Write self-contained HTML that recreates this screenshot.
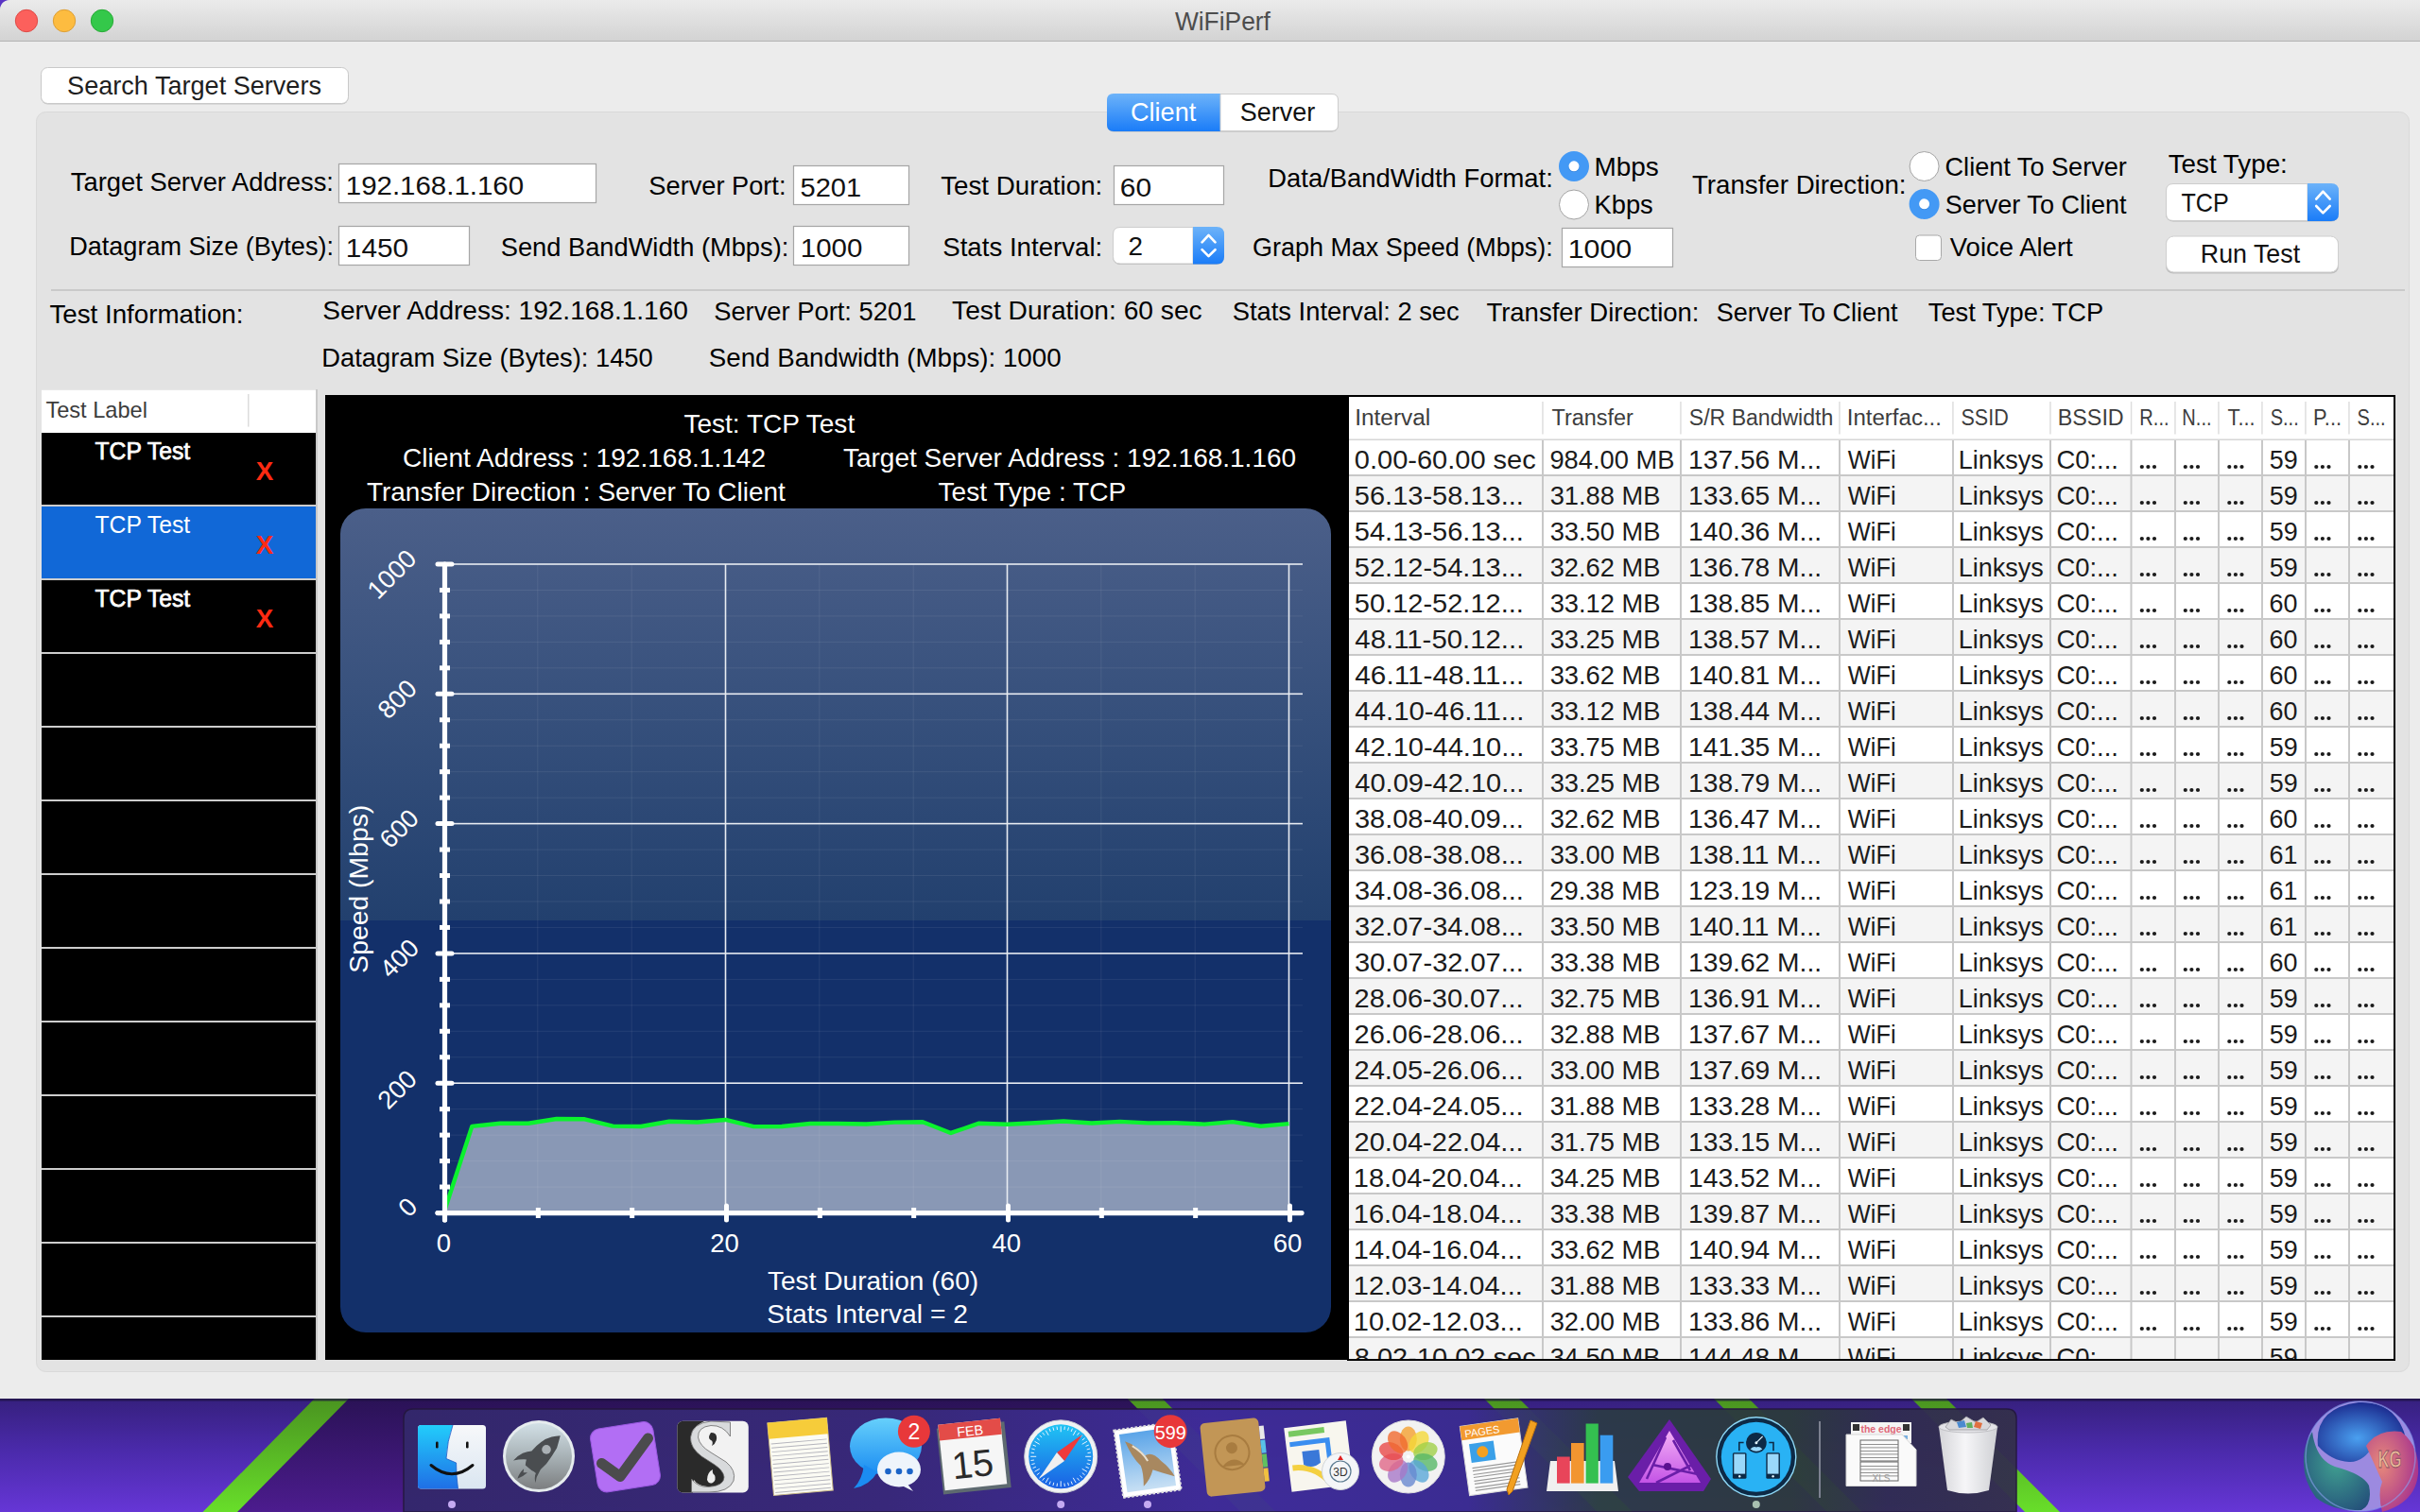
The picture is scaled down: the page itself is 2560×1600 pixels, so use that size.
<!DOCTYPE html>
<html><head><meta charset="utf-8"><title>WiFiPerf</title>
<style>
html,body{margin:0;padding:0;width:2560px;height:1600px;overflow:hidden;background:#ececec;}
svg{display:block;font-family:"Liberation Sans",sans-serif;}
</style></head><body>
<svg width="2560" height="1600" viewBox="0 0 2560 1600">
<defs>
<linearGradient id="wpv" x1="0" y1="0" x2="0" y2="1">
 <stop offset="0" stop-color="#36207e"/><stop offset="0.45" stop-color="#4a2aaa"/><stop offset="1" stop-color="#6636d6"/>
</linearGradient>
<linearGradient id="wpd" x1="0" y1="0" x2="0" y2="1">
 <stop offset="0" stop-color="#2a1256"/><stop offset="1" stop-color="#4c1c8e"/>
</linearGradient>
<linearGradient id="stripe" x1="0" y1="0" x2="0" y2="1">
 <stop offset="0" stop-color="#4a9420"/><stop offset="1" stop-color="#68de2a"/>
</linearGradient>
<linearGradient id="tb" x1="0" y1="0" x2="0" y2="1">
 <stop offset="0" stop-color="#ebebeb"/><stop offset="1" stop-color="#d3d3d3"/>
</linearGradient>
<linearGradient id="blue" x1="0" y1="0" x2="0" y2="1">
 <stop offset="0" stop-color="#6db3f9"/><stop offset="1" stop-color="#1a7cf8"/>
</linearGradient>
<linearGradient id="chartbg" x1="0" y1="0" x2="0" y2="1">
 <stop offset="0" stop-color="#4b5f89"/><stop offset="0.5" stop-color="#36507c"/><stop offset="1" stop-color="#22406e"/>
</linearGradient>
<linearGradient id="dockg" x1="427" y1="0" x2="2133" y2="0" gradientUnits="userSpaceOnUse">
 <stop offset="0" stop-color="#34286c"/><stop offset="0.3" stop-color="#38297a"/>
 <stop offset="0.5" stop-color="#3e2c98"/><stop offset="0.66" stop-color="#3a2c90"/>
 <stop offset="0.74" stop-color="#2c3a48"/><stop offset="0.86" stop-color="#2c3a3c"/>
 <stop offset="0.92" stop-color="#302c52"/><stop offset="1" stop-color="#34304c"/>
</linearGradient>
<clipPath id="chartclip"><rect x="360" y="538" width="1048" height="872" rx="27"/></clipPath>
</defs>
<rect x="0" y="1480" width="2560" height="120" fill="url(#wpv)"/>
<polygon points="350,1480 1200,1480 1320,1600 232,1600" fill="url(#wpd)"/>
<polygon points="332.7,1480 369,1480 251,1600 214.5,1600" fill="url(#stripe)"/>
<polygon points="1192.7,1480 1229.7,1480 1349.7,1600 1312.7,1600" fill="url(#stripe)"/>
<polygon points="1570.0,1480 1607.0,1480 1727.0,1600 1690.0,1600" fill="url(#stripe)"/>
<polygon points="1813.0,1480 1850.0,1480 1970.0,1600 1933.0,1600" fill="url(#stripe)"/>
<polygon points="2022.0,1480 2059.0,1480 2179.0,1600 2142.0,1600" fill="url(#stripe)"/>
<rect x="0" y="1480" width="2560" height="2.5" fill="#1e1240" opacity="0.7"/>
<rect x="0" y="0" width="14" height="14" fill="#5a34c4"/>
<path d="M0,12 Q0,0 12,0 L2560,0 L2560,1480 L8,1480 Q0,1480 0,1472 Z" fill="#ececec"/>
<path d="M0,12 Q0,0 12,0 L2560,0 L2560,43 L0,43 Z" fill="url(#tb)"/>
<rect x="0" y="43" width="2560" height="1" fill="#b4b4b4"/>
<circle cx="28" cy="22" r="11.7" fill="#fc605c" stroke="#de4a46" stroke-width="1"/>
<circle cx="68" cy="22" r="11.7" fill="#fdbc40" stroke="#de9f34" stroke-width="1"/>
<circle cx="108" cy="22" r="11.7" fill="#34c84a" stroke="#27aa35" stroke-width="1"/>
<text x="1242.88" y="32.00" font-size="27.50" fill="#4d4d4d" textLength="101.08" lengthAdjust="spacingAndGlyphs">WiFiPerf</text>
<rect x="43.5" y="72" width="325" height="38.5" rx="7" fill="#c6c6c6"/>
<rect x="43.5" y="71.5" width="325" height="38" rx="7" fill="#fff" stroke="#c9c9c9" stroke-width="1"/>
<text x="71.09" y="100.00" font-size="27.80" fill="#1e1e1e" textLength="268.88" lengthAdjust="spacingAndGlyphs">Search Target Servers</text>
<rect x="38.5" y="118.5" width="2510" height="1333" rx="10" fill="#e3e3e3" stroke="#d9d9d9" stroke-width="1"/>
<rect x="1171" y="100" width="245" height="39.5" rx="7" fill="#b8b8b8"/>
<path d="M1178,99 L1291,99 L1291,139 L1178,139 Q1171,139 1171,132 L1171,106 Q1171,99 1178,99 Z" fill="url(#blue)"/>
<path d="M1291,99.5 L1409,99.5 Q1415.5,99.5 1415.5,106 L1415.5,132 Q1415.5,138.5 1409,138.5 L1291,138.5 Z" fill="#fff" stroke="#cdcdcd" stroke-width="1"/>
<text x="1196.02" y="128.20" font-size="27.80" fill="#fff" textLength="69.27" lengthAdjust="spacingAndGlyphs">Client</text>
<text x="1311.67" y="128.20" font-size="27.80" fill="#111" textLength="79.47" lengthAdjust="spacingAndGlyphs">Server</text>
<text x="74.80" y="202.20" font-size="27.80" fill="#000" textLength="278.16" lengthAdjust="spacingAndGlyphs">Target Server Address:</text>
<rect x="358.5" y="173.5" width="272.0" height="41.0" fill="#fff" stroke="#a6a6a6" stroke-width="1.2"/>
<text x="365.76" y="206.20" font-size="27.80" fill="#111" textLength="188.39" lengthAdjust="spacingAndGlyphs">192.168.1.160</text>
<text x="686.36" y="206.00" font-size="27.80" fill="#000" textLength="145.12" lengthAdjust="spacingAndGlyphs">Server Port:</text>
<rect x="839.5" y="175.5" width="122.0" height="41.0" fill="#fff" stroke="#a6a6a6" stroke-width="1.2"/>
<text x="846.54" y="208.00" font-size="27.80" fill="#111" textLength="64.68" lengthAdjust="spacingAndGlyphs">5201</text>
<text x="995.19" y="206.00" font-size="27.80" fill="#000" textLength="171.10" lengthAdjust="spacingAndGlyphs">Test Duration:</text>
<rect x="1178.5" y="175.5" width="116.0" height="41.0" fill="#fff" stroke="#a6a6a6" stroke-width="1.2"/>
<text x="1184.88" y="208.00" font-size="27.80" fill="#111" textLength="33.29" lengthAdjust="spacingAndGlyphs">60</text>
<text x="1341.25" y="198.40" font-size="27.80" fill="#000" textLength="301.55" lengthAdjust="spacingAndGlyphs">Data/BandWidth Format:</text>
<circle cx="1665" cy="176" r="16" fill="#4399f5"/>
<circle cx="1665" cy="176.5" r="5.6" fill="#1a5cb0" opacity="0.35"/>
<circle cx="1665" cy="175.8" r="5.5" fill="#fff"/>
<circle cx="1665" cy="216.5" r="15.5" fill="#fff" stroke="#a4a4a4" stroke-width="1"/>
<text x="1686.51" y="185.70" font-size="27.80" fill="#000" textLength="68.30" lengthAdjust="spacingAndGlyphs">Mbps</text>
<text x="1686.56" y="225.70" font-size="27.80" fill="#000" textLength="62.23" lengthAdjust="spacingAndGlyphs">Kbps</text>
<text x="1789.98" y="205.00" font-size="27.80" fill="#000" textLength="226.53" lengthAdjust="spacingAndGlyphs">Transfer Direction:</text>
<circle cx="2035.6" cy="176" r="15.5" fill="#fff" stroke="#a4a4a4" stroke-width="1"/>
<circle cx="2035.6" cy="216" r="16" fill="#4399f5"/>
<circle cx="2035.6" cy="216.5" r="5.6" fill="#1a5cb0" opacity="0.35"/>
<circle cx="2035.6" cy="215.8" r="5.5" fill="#fff"/>
<text x="2057.55" y="185.50" font-size="27.80" fill="#000" textLength="192.29" lengthAdjust="spacingAndGlyphs">Client To Server</text>
<text x="2057.69" y="225.50" font-size="27.80" fill="#000" textLength="191.90" lengthAdjust="spacingAndGlyphs">Server To Client</text>
<text x="2293.70" y="182.50" font-size="27.80" fill="#000" textLength="126.14" lengthAdjust="spacingAndGlyphs">Test Type:</text>
<rect x="2291" y="195" width="183" height="39.5" rx="8" fill="#b8b8b8"/>
<path d="M2299,194.5 L2441,194.5 L2441,233.5 L2299,233.5 Q2291.5,233.5 2291.5,226 L2291.5,202 Q2291.5,194.5 2299,194.5 Z" fill="#fff" stroke="#cdcdcd" stroke-width="1"/>
<path d="M2441,194 L2466,194 Q2474,194 2474,202 L2474,226 Q2474,234 2466,234 L2441,234 Z" fill="url(#blue)"/>
<polyline points="2450.2,210.6 2457.4,202.7 2464.7,210.6" fill="none" stroke="#fff" stroke-width="2.6" stroke-linecap="round" stroke-linejoin="round"/>
<polyline points="2450.2,218.0 2457.4,225.3 2464.7,218.0" fill="none" stroke="#fff" stroke-width="2.6" stroke-linecap="round" stroke-linejoin="round"/>
<text x="2307.44" y="223.80" font-size="27.80" fill="#111" textLength="50.29" lengthAdjust="spacingAndGlyphs">TCP</text>
<text x="73.18" y="270.00" font-size="27.80" fill="#000" textLength="279.79" lengthAdjust="spacingAndGlyphs">Datagram Size (Bytes):</text>
<rect x="358.5" y="239.5" width="138.0" height="41.0" fill="#fff" stroke="#a6a6a6" stroke-width="1.2"/>
<text x="365.83" y="271.50" font-size="27.80" fill="#111" textLength="66.23" lengthAdjust="spacingAndGlyphs">1450</text>
<text x="529.76" y="271.00" font-size="27.80" fill="#000" textLength="304.53" lengthAdjust="spacingAndGlyphs">Send BandWidth (Mbps):</text>
<rect x="839.5" y="239.5" width="122.0" height="41.0" fill="#fff" stroke="#a6a6a6" stroke-width="1.2"/>
<text x="846.75" y="271.50" font-size="27.80" fill="#111" textLength="65.60" lengthAdjust="spacingAndGlyphs">1000</text>
<text x="997.24" y="271.00" font-size="27.80" fill="#000" textLength="169.08" lengthAdjust="spacingAndGlyphs">Stats Interval:</text>
<rect x="1177" y="241" width="118" height="39" rx="8" fill="#b8b8b8"/>
<path d="M1185,240.5 L1262,240.5 L1262,279 L1185,279 Q1177.5,279 1177.5,271.5 L1177.5,248 Q1177.5,240.5 1185,240.5 Z" fill="#fff" stroke="#cdcdcd" stroke-width="1"/>
<path d="M1262,240 L1287,240 Q1295,240 1295,248 L1295,271.5 Q1295,279.5 1287,279.5 L1262,279.5 Z" fill="url(#blue)"/>
<polyline points="1271.6,256.3 1278.5,248.9 1285.5,256.3" fill="none" stroke="#fff" stroke-width="2.6" stroke-linecap="round" stroke-linejoin="round"/>
<polyline points="1271.6,264.2 1278.5,271.1 1285.5,264.2" fill="none" stroke="#fff" stroke-width="2.6" stroke-linecap="round" stroke-linejoin="round"/>
<text x="1193.60" y="269.70" font-size="27.80" fill="#111" textLength="15.50" lengthAdjust="spacingAndGlyphs">2</text>
<text x="1324.94" y="271.00" font-size="27.80" fill="#000" textLength="317.82" lengthAdjust="spacingAndGlyphs">Graph Max Speed (Mbps):</text>
<rect x="1652.5" y="241.5" width="117.0" height="41.0" fill="#fff" stroke="#a6a6a6" stroke-width="1.2"/>
<text x="1658.69" y="272.50" font-size="27.80" fill="#111" textLength="67.50" lengthAdjust="spacingAndGlyphs">1000</text>
<rect x="2026.5" y="249" width="27" height="26.5" rx="4" fill="#fff" stroke="#a9a9a9" stroke-width="1"/>
<text x="2062.78" y="271.00" font-size="27.80" fill="#000" textLength="129.91" lengthAdjust="spacingAndGlyphs">Voice Alert</text>
<rect x="2291.0" y="250.5" width="183.0" height="39.0" rx="8" fill="#bdbdbd"/>
<rect x="2291.5" y="250.0" width="182.0" height="38.0" rx="8" fill="#fff" stroke="#cfcfcf" stroke-width="1"/>
<text x="2327.87" y="278.00" font-size="27.80" fill="#111" textLength="105.22" lengthAdjust="spacingAndGlyphs">Run Test</text>
<rect x="54" y="306" width="2490" height="2" fill="#cacaca"/>
<text x="52.39" y="342.00" font-size="27.80" fill="#000" textLength="205.11" lengthAdjust="spacingAndGlyphs">Test Information:</text>
<text x="341.33" y="338.00" font-size="27.80" fill="#000" textLength="386.56" lengthAdjust="spacingAndGlyphs">Server Address: 192.168.1.160</text>
<text x="755.16" y="338.50" font-size="27.80" fill="#000" textLength="214.18" lengthAdjust="spacingAndGlyphs">Server Port: 5201</text>
<text x="1007.09" y="338.00" font-size="27.80" fill="#000" textLength="264.62" lengthAdjust="spacingAndGlyphs">Test Duration:  60 sec</text>
<text x="1303.76" y="338.50" font-size="27.80" fill="#000" textLength="239.96" lengthAdjust="spacingAndGlyphs">Stats Interval: 2 sec</text>
<text x="1572.39" y="340.00" font-size="27.80" fill="#000" textLength="225.11" lengthAdjust="spacingAndGlyphs">Transfer Direction:</text>
<text x="1815.80" y="340.00" font-size="27.80" fill="#000" textLength="191.70" lengthAdjust="spacingAndGlyphs">Server To Client</text>
<text x="2039.81" y="340.00" font-size="27.80" fill="#000" textLength="185.29" lengthAdjust="spacingAndGlyphs">Test Type: TCP</text>
<text x="340.36" y="388.00" font-size="27.80" fill="#000" textLength="350.30" lengthAdjust="spacingAndGlyphs">Datagram Size (Bytes): 1450</text>
<text x="749.77" y="388.00" font-size="27.80" fill="#000" textLength="372.79" lengthAdjust="spacingAndGlyphs">Send Bandwidth (Mbps):  1000</text>
<rect x="334" y="412" width="2" height="1027" fill="#c9c9c9"/>
<rect x="44" y="412.8" width="290" height="45.2" fill="#fff"/>
<rect x="262" y="417" width="1.5" height="34.6" fill="#dcdcdc"/>
<text x="48.38" y="442.20" font-size="23.60" fill="#3c3c3c" textLength="107.56" lengthAdjust="spacingAndGlyphs">Test Label</text>
<rect x="44" y="458" width="290" height="981" fill="#000"/>
<rect x="44" y="534" width="290" height="2" fill="#cdcdcd"/>
<rect x="44" y="612" width="290" height="2" fill="#cdcdcd"/>
<rect x="44" y="690" width="290" height="2" fill="#cdcdcd"/>
<rect x="44" y="768" width="290" height="2" fill="#cdcdcd"/>
<rect x="44" y="846" width="290" height="2" fill="#cdcdcd"/>
<rect x="44" y="924" width="290" height="2" fill="#cdcdcd"/>
<rect x="44" y="1002" width="290" height="2" fill="#cdcdcd"/>
<rect x="44" y="1080" width="290" height="2" fill="#cdcdcd"/>
<rect x="44" y="1158" width="290" height="2" fill="#cdcdcd"/>
<rect x="44" y="1236" width="290" height="2" fill="#cdcdcd"/>
<rect x="44" y="1314" width="290" height="2" fill="#cdcdcd"/>
<rect x="44" y="1392" width="290" height="2" fill="#cdcdcd"/>
<rect x="44" y="536" width="290" height="76" fill="#1168d7"/>
<text x="100.46" y="486.10" font-size="25.60" fill="#fff" textLength="100.71" lengthAdjust="spacingAndGlyphs" stroke="#fff" stroke-width="0.75">TCP Test</text>
<text x="270.76" y="508.00" font-size="28.50" fill="#ff2a12" font-weight="bold" textLength="18.49" lengthAdjust="spacingAndGlyphs">X</text>
<text x="100.46" y="564.10" font-size="25.60" fill="#fff" textLength="100.71" lengthAdjust="spacingAndGlyphs">TCP Test</text>
<text x="270.76" y="586.00" font-size="28.50" fill="#ff2a12" font-weight="bold" textLength="18.49" lengthAdjust="spacingAndGlyphs">X</text>
<text x="100.46" y="642.10" font-size="25.60" fill="#fff" textLength="100.71" lengthAdjust="spacingAndGlyphs" stroke="#fff" stroke-width="0.75">TCP Test</text>
<text x="270.76" y="664.00" font-size="28.50" fill="#ff2a12" font-weight="bold" textLength="18.49" lengthAdjust="spacingAndGlyphs">X</text>
<rect x="344" y="418" width="1081" height="1021" fill="#000"/>
<g clip-path="url(#chartclip)">
<rect x="360" y="538" width="1048" height="436" fill="url(#chartbg)"/>
<rect x="360" y="974" width="1048" height="436" fill="#13306a"/>
<rect x="568.33" y="597" width="1" height="686" fill="#fff" opacity="0.08"/>
<rect x="667.67" y="597" width="1" height="686" fill="#fff" opacity="0.08"/>
<rect x="866.33" y="597" width="1" height="686" fill="#fff" opacity="0.08"/>
<rect x="965.66" y="597" width="1" height="686" fill="#fff" opacity="0.08"/>
<rect x="1164.33" y="597" width="1" height="686" fill="#fff" opacity="0.08"/>
<rect x="1263.66" y="597" width="1" height="686" fill="#fff" opacity="0.08"/>
<rect x="470" y="1255.54" width="908" height="1" fill="#fff" opacity="0.08"/>
<rect x="470" y="1228.08" width="908" height="1" fill="#fff" opacity="0.08"/>
<rect x="470" y="1200.62" width="908" height="1" fill="#fff" opacity="0.08"/>
<rect x="470" y="1173.16" width="908" height="1" fill="#fff" opacity="0.08"/>
<rect x="470" y="1118.24" width="908" height="1" fill="#fff" opacity="0.08"/>
<rect x="470" y="1090.78" width="908" height="1" fill="#fff" opacity="0.08"/>
<rect x="470" y="1063.32" width="908" height="1" fill="#fff" opacity="0.08"/>
<rect x="470" y="1035.86" width="908" height="1" fill="#fff" opacity="0.08"/>
<rect x="470" y="980.94" width="908" height="1" fill="#fff" opacity="0.08"/>
<rect x="470" y="953.48" width="908" height="1" fill="#fff" opacity="0.08"/>
<rect x="470" y="926.02" width="908" height="1" fill="#fff" opacity="0.08"/>
<rect x="470" y="898.56" width="908" height="1" fill="#fff" opacity="0.08"/>
<rect x="470" y="843.64" width="908" height="1" fill="#fff" opacity="0.08"/>
<rect x="470" y="816.18" width="908" height="1" fill="#fff" opacity="0.08"/>
<rect x="470" y="788.72" width="908" height="1" fill="#fff" opacity="0.08"/>
<rect x="470" y="761.26" width="908" height="1" fill="#fff" opacity="0.08"/>
<rect x="470" y="706.34" width="908" height="1" fill="#fff" opacity="0.08"/>
<rect x="470" y="678.88" width="908" height="1" fill="#fff" opacity="0.08"/>
<rect x="470" y="651.42" width="908" height="1" fill="#fff" opacity="0.08"/>
<rect x="470" y="623.96" width="908" height="1" fill="#fff" opacity="0.08"/>
<polygon points="469.50,1283.50 499.30,1191.85 529.10,1188.76 558.90,1188.76 588.70,1183.96 618.50,1184.31 648.30,1191.61 678.10,1191.97 707.90,1186.74 737.70,1187.48 767.50,1184.97 797.30,1192.09 827.10,1192.00 856.90,1188.98 886.70,1188.99 916.50,1189.51 946.30,1187.65 976.10,1187.31 1005.90,1198.93 1035.70,1188.69 1065.50,1189.81 1095.30,1188.22 1125.10,1186.46 1154.90,1188.46 1184.70,1186.83 1214.50,1188.37 1244.30,1188.18 1274.10,1189.60 1303.90,1187.14 1333.70,1191.75 1363.50,1189.07 1363.50,1283.50" fill="#fff" fill-opacity="0.5"/>
<rect x="470" y="1145.40" width="908" height="1.6" fill="#e8ecf2"/>
<rect x="470" y="1008.10" width="908" height="1.6" fill="#e8ecf2"/>
<rect x="470" y="870.80" width="908" height="1.6" fill="#e8ecf2"/>
<rect x="470" y="733.50" width="908" height="1.6" fill="#e8ecf2"/>
<rect x="470" y="596.20" width="908" height="1.6" fill="#e8ecf2"/>
<rect x="766.70" y="597" width="1.6" height="686" fill="#e8ecf2"/>
<rect x="1064.70" y="597" width="1.6" height="686" fill="#e8ecf2"/>
<rect x="1362.70" y="597" width="1.6" height="686" fill="#e8ecf2"/>
<polyline points="469.50,1283.50 499.30,1191.85 529.10,1188.76 558.90,1188.76 588.70,1183.96 618.50,1184.31 648.30,1191.61 678.10,1191.97 707.90,1186.74 737.70,1187.48 767.50,1184.97 797.30,1192.09 827.10,1192.00 856.90,1188.98 886.70,1188.99 916.50,1189.51 946.30,1187.65 976.10,1187.31 1005.90,1198.93 1035.70,1188.69 1065.50,1189.81 1095.30,1188.22 1125.10,1186.46 1154.90,1188.46 1184.70,1186.83 1214.50,1188.37 1244.30,1188.18 1274.10,1189.60 1303.90,1187.14 1333.70,1191.75 1363.50,1189.07" fill="none" stroke="#0bf22e" stroke-width="4.4" stroke-linejoin="round"/>
<line x1="470.5" y1="597" x2="470.5" y2="1291" stroke="#fff" stroke-width="5.2" stroke-linecap="round"/>
<line x1="463" y1="1283.6" x2="1377" y2="1283.6" stroke="#fff" stroke-width="5.2" stroke-linecap="round"/>
<line x1="463" y1="1283.50" x2="478" y2="1283.50" stroke="#fff" stroke-width="5" stroke-linecap="round"/>
<rect x="465" y="1253.54" width="11" height="5" fill="#fff"/>
<rect x="465" y="1226.08" width="11" height="5" fill="#fff"/>
<rect x="465" y="1198.62" width="11" height="5" fill="#fff"/>
<rect x="465" y="1171.16" width="11" height="5" fill="#fff"/>
<line x1="463" y1="1146.20" x2="478" y2="1146.20" stroke="#fff" stroke-width="5" stroke-linecap="round"/>
<rect x="465" y="1116.24" width="11" height="5" fill="#fff"/>
<rect x="465" y="1088.78" width="11" height="5" fill="#fff"/>
<rect x="465" y="1061.32" width="11" height="5" fill="#fff"/>
<rect x="465" y="1033.86" width="11" height="5" fill="#fff"/>
<line x1="463" y1="1008.90" x2="478" y2="1008.90" stroke="#fff" stroke-width="5" stroke-linecap="round"/>
<rect x="465" y="978.94" width="11" height="5" fill="#fff"/>
<rect x="465" y="951.48" width="11" height="5" fill="#fff"/>
<rect x="465" y="924.02" width="11" height="5" fill="#fff"/>
<rect x="465" y="896.56" width="11" height="5" fill="#fff"/>
<line x1="463" y1="871.60" x2="478" y2="871.60" stroke="#fff" stroke-width="5" stroke-linecap="round"/>
<rect x="465" y="841.64" width="11" height="5" fill="#fff"/>
<rect x="465" y="814.18" width="11" height="5" fill="#fff"/>
<rect x="465" y="786.72" width="11" height="5" fill="#fff"/>
<rect x="465" y="759.26" width="11" height="5" fill="#fff"/>
<line x1="463" y1="734.30" x2="478" y2="734.30" stroke="#fff" stroke-width="5" stroke-linecap="round"/>
<rect x="465" y="704.34" width="11" height="5" fill="#fff"/>
<rect x="465" y="676.88" width="11" height="5" fill="#fff"/>
<rect x="465" y="649.42" width="11" height="5" fill="#fff"/>
<rect x="465" y="621.96" width="11" height="5" fill="#fff"/>
<line x1="463" y1="597.00" x2="478" y2="597.00" stroke="#fff" stroke-width="5" stroke-linecap="round"/>
<line x1="470.50" y1="1276" x2="470.50" y2="1291" stroke="#fff" stroke-width="5" stroke-linecap="round"/>
<rect x="566.83" y="1278" width="5" height="11" fill="#fff"/>
<rect x="666.17" y="1278" width="5" height="11" fill="#fff"/>
<line x1="768.50" y1="1276" x2="768.50" y2="1291" stroke="#fff" stroke-width="5" stroke-linecap="round"/>
<rect x="864.83" y="1278" width="5" height="11" fill="#fff"/>
<rect x="964.16" y="1278" width="5" height="11" fill="#fff"/>
<line x1="1066.50" y1="1276" x2="1066.50" y2="1291" stroke="#fff" stroke-width="5" stroke-linecap="round"/>
<rect x="1162.83" y="1278" width="5" height="11" fill="#fff"/>
<rect x="1262.16" y="1278" width="5" height="11" fill="#fff"/>
<line x1="1364.50" y1="1276" x2="1364.50" y2="1291" stroke="#fff" stroke-width="5" stroke-linecap="round"/>
<g transform="translate(414.4,607.0) rotate(-45)"><text x="-30.53" y="9.67" font-size="27.00" fill="#fff" textLength="60.06" lengthAdjust="spacingAndGlyphs">1000</text></g>
<g transform="translate(420.0,739.5) rotate(-45)"><text x="-22.58" y="9.67" font-size="27.00" fill="#fff" textLength="45.05" lengthAdjust="spacingAndGlyphs">800</text></g>
<g transform="translate(422.0,876.5) rotate(-45)"><text x="-22.68" y="9.67" font-size="27.00" fill="#fff" textLength="45.05" lengthAdjust="spacingAndGlyphs">600</text></g>
<g transform="translate(422.0,1014.0) rotate(-45)"><text x="-22.31" y="9.67" font-size="27.00" fill="#fff" textLength="45.05" lengthAdjust="spacingAndGlyphs">400</text></g>
<g transform="translate(420.0,1152.5) rotate(-45)"><text x="-22.68" y="9.67" font-size="27.00" fill="#fff" textLength="45.05" lengthAdjust="spacingAndGlyphs">200</text></g>
<g transform="translate(431.0,1277.0) rotate(-45)"><text x="-7.51" y="9.67" font-size="27.00" fill="#fff" textLength="15.02" lengthAdjust="spacingAndGlyphs">0</text></g>
<g transform="translate(381.6,941) rotate(-90)"><text x="-88.79" y="7.80" font-size="27.00" fill="#fff" textLength="178.05" lengthAdjust="spacingAndGlyphs">Speed (Mbps)</text></g>
<text x="461.85" y="1325.30" font-size="27.50" fill="#fff" textLength="15.29" lengthAdjust="spacingAndGlyphs">0</text>
<text x="751.15" y="1325.30" font-size="27.50" fill="#fff" textLength="30.59" lengthAdjust="spacingAndGlyphs">20</text>
<text x="1049.43" y="1325.30" font-size="27.50" fill="#fff" textLength="30.59" lengthAdjust="spacingAndGlyphs">40</text>
<text x="1346.84" y="1325.30" font-size="27.50" fill="#fff" textLength="30.59" lengthAdjust="spacingAndGlyphs">60</text>
<text x="811.98" y="1364.50" font-size="27.50" fill="#fff" textLength="223.14" lengthAdjust="spacingAndGlyphs">Test Duration (60)</text>
<text x="811.32" y="1400.20" font-size="27.50" fill="#fff" textLength="212.60" lengthAdjust="spacingAndGlyphs">Stats Interval = 2</text>
</g>
<text x="723.40" y="458.00" font-size="28.00" fill="#fff" textLength="180.80" lengthAdjust="spacingAndGlyphs">Test: TCP Test</text>
<text x="426.08" y="493.80" font-size="28.00" fill="#fff" textLength="384.03" lengthAdjust="spacingAndGlyphs">Client Address : 192.168.1.142</text>
<text x="891.98" y="493.80" font-size="28.00" fill="#fff" textLength="479.10" lengthAdjust="spacingAndGlyphs">Target Server Address : 192.168.1.160</text>
<text x="387.98" y="529.60" font-size="28.00" fill="#fff" textLength="442.82" lengthAdjust="spacingAndGlyphs">Transfer Direction : Server To Client</text>
<text x="992.59" y="529.60" font-size="28.00" fill="#fff" textLength="198.55" lengthAdjust="spacingAndGlyphs">Test Type : TCP</text>
<rect x="1425" y="418" width="1109" height="1022" fill="#000"/>
<rect x="1427" y="420" width="1105" height="1018" fill="#fff"/>
<svg x="1427" y="420" width="1105" height="1018" viewBox="1427 420 1105 1018" overflow="hidden">
<rect x="1427" y="502" width="1105" height="2" fill="#c8c8c8"/>
<rect x="1427" y="504" width="1105" height="36" fill="#f4f4f4"/>
<rect x="1427" y="540" width="1105" height="2" fill="#c8c8c8"/>
<rect x="1427" y="578" width="1105" height="2" fill="#c8c8c8"/>
<rect x="1427" y="580" width="1105" height="36" fill="#f4f4f4"/>
<rect x="1427" y="616" width="1105" height="2" fill="#c8c8c8"/>
<rect x="1427" y="654" width="1105" height="2" fill="#c8c8c8"/>
<rect x="1427" y="656" width="1105" height="36" fill="#f4f4f4"/>
<rect x="1427" y="692" width="1105" height="2" fill="#c8c8c8"/>
<rect x="1427" y="730" width="1105" height="2" fill="#c8c8c8"/>
<rect x="1427" y="732" width="1105" height="36" fill="#f4f4f4"/>
<rect x="1427" y="768" width="1105" height="2" fill="#c8c8c8"/>
<rect x="1427" y="806" width="1105" height="2" fill="#c8c8c8"/>
<rect x="1427" y="808" width="1105" height="36" fill="#f4f4f4"/>
<rect x="1427" y="844" width="1105" height="2" fill="#c8c8c8"/>
<rect x="1427" y="882" width="1105" height="2" fill="#c8c8c8"/>
<rect x="1427" y="884" width="1105" height="36" fill="#f4f4f4"/>
<rect x="1427" y="920" width="1105" height="2" fill="#c8c8c8"/>
<rect x="1427" y="958" width="1105" height="2" fill="#c8c8c8"/>
<rect x="1427" y="960" width="1105" height="36" fill="#f4f4f4"/>
<rect x="1427" y="996" width="1105" height="2" fill="#c8c8c8"/>
<rect x="1427" y="1034" width="1105" height="2" fill="#c8c8c8"/>
<rect x="1427" y="1036" width="1105" height="36" fill="#f4f4f4"/>
<rect x="1427" y="1072" width="1105" height="2" fill="#c8c8c8"/>
<rect x="1427" y="1110" width="1105" height="2" fill="#c8c8c8"/>
<rect x="1427" y="1112" width="1105" height="36" fill="#f4f4f4"/>
<rect x="1427" y="1148" width="1105" height="2" fill="#c8c8c8"/>
<rect x="1427" y="1186" width="1105" height="2" fill="#c8c8c8"/>
<rect x="1427" y="1188" width="1105" height="36" fill="#f4f4f4"/>
<rect x="1427" y="1224" width="1105" height="2" fill="#c8c8c8"/>
<rect x="1427" y="1262" width="1105" height="2" fill="#c8c8c8"/>
<rect x="1427" y="1264" width="1105" height="36" fill="#f4f4f4"/>
<rect x="1427" y="1300" width="1105" height="2" fill="#c8c8c8"/>
<rect x="1427" y="1338" width="1105" height="2" fill="#c8c8c8"/>
<rect x="1427" y="1340" width="1105" height="36" fill="#f4f4f4"/>
<rect x="1427" y="1376" width="1105" height="2" fill="#c8c8c8"/>
<rect x="1427" y="1414" width="1105" height="2" fill="#c8c8c8"/>
<rect x="1427" y="1416" width="1105" height="36" fill="#f4f4f4"/>
<rect x="1427" y="1452" width="1105" height="2" fill="#c8c8c8"/>
<rect x="1631.0" y="466" width="2" height="980" fill="#c8c8c8"/>
<rect x="1777.0" y="466" width="2" height="980" fill="#c8c8c8"/>
<rect x="1945.0" y="466" width="2" height="980" fill="#c8c8c8"/>
<rect x="2065.0" y="466" width="2" height="980" fill="#c8c8c8"/>
<rect x="2168.0" y="466" width="2" height="980" fill="#c8c8c8"/>
<rect x="2253.5" y="466" width="2" height="980" fill="#c8c8c8"/>
<rect x="2300.0" y="466" width="2" height="980" fill="#c8c8c8"/>
<rect x="2346.0" y="466" width="2" height="980" fill="#c8c8c8"/>
<rect x="2392.0" y="466" width="2" height="980" fill="#c8c8c8"/>
<rect x="2438.0" y="466" width="2" height="980" fill="#c8c8c8"/>
<rect x="2484.0" y="466" width="2" height="980" fill="#c8c8c8"/>
<rect x="1427" y="420" width="1105" height="45" fill="#fff"/>
<rect x="1427" y="464.5" width="1105" height="1.5" fill="#d6d6d6"/>
<rect x="1631.2" y="425" width="1.5" height="34.5" fill="#dedede"/>
<rect x="1777.2" y="425" width="1.5" height="34.5" fill="#dedede"/>
<rect x="1945.2" y="425" width="1.5" height="34.5" fill="#dedede"/>
<rect x="2065.2" y="425" width="1.5" height="34.5" fill="#dedede"/>
<rect x="2168.2" y="425" width="1.5" height="34.5" fill="#dedede"/>
<rect x="2253.8" y="425" width="1.5" height="34.5" fill="#dedede"/>
<rect x="2300.2" y="425" width="1.5" height="34.5" fill="#dedede"/>
<rect x="2346.2" y="425" width="1.5" height="34.5" fill="#dedede"/>
<rect x="2392.2" y="425" width="1.5" height="34.5" fill="#dedede"/>
<rect x="2438.2" y="425" width="1.5" height="34.5" fill="#dedede"/>
<rect x="2484.2" y="425" width="1.5" height="34.5" fill="#dedede"/>
<text x="1433.25" y="450.00" font-size="23.30" fill="#3d3d3d" textLength="79.98" lengthAdjust="spacingAndGlyphs">Interval</text>
<text x="1641.48" y="450.00" font-size="23.30" fill="#3d3d3d" textLength="86.41" lengthAdjust="spacingAndGlyphs">Transfer</text>
<text x="1786.85" y="450.00" font-size="23.30" fill="#3d3d3d" textLength="152.44" lengthAdjust="spacingAndGlyphs">S/R Bandwidth</text>
<text x="1953.78" y="450.00" font-size="23.30" fill="#3d3d3d" textLength="100.21" lengthAdjust="spacingAndGlyphs">Interfac...</text>
<text x="2074.52" y="450.00" font-size="23.30" fill="#3d3d3d" textLength="50.21" lengthAdjust="spacingAndGlyphs">SSID</text>
<text x="2176.79" y="450.00" font-size="23.30" fill="#3d3d3d" textLength="69.92" lengthAdjust="spacingAndGlyphs">BSSID</text>
<text x="2263.36" y="450.00" font-size="23.30" fill="#3d3d3d" textLength="31.17" lengthAdjust="spacingAndGlyphs">R...</text>
<text x="2308.36" y="450.00" font-size="23.30" fill="#3d3d3d" textLength="31.17" lengthAdjust="spacingAndGlyphs">N...</text>
<text x="2356.55" y="450.00" font-size="23.30" fill="#3d3d3d" textLength="28.94" lengthAdjust="spacingAndGlyphs">T...</text>
<text x="2401.69" y="450.00" font-size="23.30" fill="#3d3d3d" textLength="30.07" lengthAdjust="spacingAndGlyphs">S...</text>
<text x="2447.06" y="450.00" font-size="23.30" fill="#3d3d3d" textLength="30.07" lengthAdjust="spacingAndGlyphs">P...</text>
<text x="2493.59" y="450.00" font-size="23.30" fill="#3d3d3d" textLength="30.07" lengthAdjust="spacingAndGlyphs">S...</text>
<text x="1432.87" y="496.00" font-size="26.90" fill="#1b1b1b" textLength="191.90" lengthAdjust="spacingAndGlyphs">0.00-60.00 sec</text>
<text x="1639.42" y="496.00" font-size="26.90" fill="#1b1b1b" textLength="132.02" lengthAdjust="spacingAndGlyphs">984.00 MB</text>
<text x="1786.05" y="496.00" font-size="26.90" fill="#1b1b1b" textLength="141.02" lengthAdjust="spacingAndGlyphs">137.56 M...</text>
<text x="1954.69" y="496.00" font-size="26.90" fill="#1b1b1b" textLength="50.93" lengthAdjust="spacingAndGlyphs">WiFi</text>
<text x="2071.78" y="496.00" font-size="26.90" fill="#1b1b1b" textLength="90.09" lengthAdjust="spacingAndGlyphs">Linksys</text>
<text x="2175.41" y="496.00" font-size="26.90" fill="#1b1b1b" textLength="65.60" lengthAdjust="spacingAndGlyphs">C0:...</text>
<circle cx="2265.8" cy="494.0" r="2.1" fill="#1b1b1b"/>
<circle cx="2272.4" cy="494.0" r="2.1" fill="#1b1b1b"/>
<circle cx="2279.0" cy="494.0" r="2.1" fill="#1b1b1b"/>
<circle cx="2311.8" cy="494.0" r="2.1" fill="#1b1b1b"/>
<circle cx="2318.4" cy="494.0" r="2.1" fill="#1b1b1b"/>
<circle cx="2325.0" cy="494.0" r="2.1" fill="#1b1b1b"/>
<circle cx="2358.3" cy="494.0" r="2.1" fill="#1b1b1b"/>
<circle cx="2364.9" cy="494.0" r="2.1" fill="#1b1b1b"/>
<circle cx="2371.5" cy="494.0" r="2.1" fill="#1b1b1b"/>
<circle cx="2450.3" cy="494.0" r="2.1" fill="#1b1b1b"/>
<circle cx="2456.9" cy="494.0" r="2.1" fill="#1b1b1b"/>
<circle cx="2463.5" cy="494.0" r="2.1" fill="#1b1b1b"/>
<circle cx="2496.3" cy="494.0" r="2.1" fill="#1b1b1b"/>
<circle cx="2502.9" cy="494.0" r="2.1" fill="#1b1b1b"/>
<circle cx="2509.5" cy="494.0" r="2.1" fill="#1b1b1b"/>
<text x="2400.72" y="496.00" font-size="26.90" fill="#1b1b1b" textLength="29.92" lengthAdjust="spacingAndGlyphs">59</text>
<text x="1432.84" y="534.00" font-size="26.90" fill="#1b1b1b" textLength="179.01" lengthAdjust="spacingAndGlyphs">56.13-58.13...</text>
<text x="1639.66" y="534.00" font-size="26.90" fill="#1b1b1b" textLength="116.84" lengthAdjust="spacingAndGlyphs">31.88 MB</text>
<text x="1786.05" y="534.00" font-size="26.90" fill="#1b1b1b" textLength="141.02" lengthAdjust="spacingAndGlyphs">133.65 M...</text>
<text x="1954.69" y="534.00" font-size="26.90" fill="#1b1b1b" textLength="50.93" lengthAdjust="spacingAndGlyphs">WiFi</text>
<text x="2071.78" y="534.00" font-size="26.90" fill="#1b1b1b" textLength="90.09" lengthAdjust="spacingAndGlyphs">Linksys</text>
<text x="2175.41" y="534.00" font-size="26.90" fill="#1b1b1b" textLength="65.60" lengthAdjust="spacingAndGlyphs">C0:...</text>
<circle cx="2265.8" cy="532.0" r="2.1" fill="#1b1b1b"/>
<circle cx="2272.4" cy="532.0" r="2.1" fill="#1b1b1b"/>
<circle cx="2279.0" cy="532.0" r="2.1" fill="#1b1b1b"/>
<circle cx="2311.8" cy="532.0" r="2.1" fill="#1b1b1b"/>
<circle cx="2318.4" cy="532.0" r="2.1" fill="#1b1b1b"/>
<circle cx="2325.0" cy="532.0" r="2.1" fill="#1b1b1b"/>
<circle cx="2358.3" cy="532.0" r="2.1" fill="#1b1b1b"/>
<circle cx="2364.9" cy="532.0" r="2.1" fill="#1b1b1b"/>
<circle cx="2371.5" cy="532.0" r="2.1" fill="#1b1b1b"/>
<circle cx="2450.3" cy="532.0" r="2.1" fill="#1b1b1b"/>
<circle cx="2456.9" cy="532.0" r="2.1" fill="#1b1b1b"/>
<circle cx="2463.5" cy="532.0" r="2.1" fill="#1b1b1b"/>
<circle cx="2496.3" cy="532.0" r="2.1" fill="#1b1b1b"/>
<circle cx="2502.9" cy="532.0" r="2.1" fill="#1b1b1b"/>
<circle cx="2509.5" cy="532.0" r="2.1" fill="#1b1b1b"/>
<text x="2400.72" y="534.00" font-size="26.90" fill="#1b1b1b" textLength="29.92" lengthAdjust="spacingAndGlyphs">59</text>
<text x="1432.84" y="572.00" font-size="26.90" fill="#1b1b1b" textLength="179.01" lengthAdjust="spacingAndGlyphs">54.13-56.13...</text>
<text x="1639.66" y="572.00" font-size="26.90" fill="#1b1b1b" textLength="116.84" lengthAdjust="spacingAndGlyphs">33.50 MB</text>
<text x="1786.05" y="572.00" font-size="26.90" fill="#1b1b1b" textLength="141.02" lengthAdjust="spacingAndGlyphs">140.36 M...</text>
<text x="1954.69" y="572.00" font-size="26.90" fill="#1b1b1b" textLength="50.93" lengthAdjust="spacingAndGlyphs">WiFi</text>
<text x="2071.78" y="572.00" font-size="26.90" fill="#1b1b1b" textLength="90.09" lengthAdjust="spacingAndGlyphs">Linksys</text>
<text x="2175.41" y="572.00" font-size="26.90" fill="#1b1b1b" textLength="65.60" lengthAdjust="spacingAndGlyphs">C0:...</text>
<circle cx="2265.8" cy="570.0" r="2.1" fill="#1b1b1b"/>
<circle cx="2272.4" cy="570.0" r="2.1" fill="#1b1b1b"/>
<circle cx="2279.0" cy="570.0" r="2.1" fill="#1b1b1b"/>
<circle cx="2311.8" cy="570.0" r="2.1" fill="#1b1b1b"/>
<circle cx="2318.4" cy="570.0" r="2.1" fill="#1b1b1b"/>
<circle cx="2325.0" cy="570.0" r="2.1" fill="#1b1b1b"/>
<circle cx="2358.3" cy="570.0" r="2.1" fill="#1b1b1b"/>
<circle cx="2364.9" cy="570.0" r="2.1" fill="#1b1b1b"/>
<circle cx="2371.5" cy="570.0" r="2.1" fill="#1b1b1b"/>
<circle cx="2450.3" cy="570.0" r="2.1" fill="#1b1b1b"/>
<circle cx="2456.9" cy="570.0" r="2.1" fill="#1b1b1b"/>
<circle cx="2463.5" cy="570.0" r="2.1" fill="#1b1b1b"/>
<circle cx="2496.3" cy="570.0" r="2.1" fill="#1b1b1b"/>
<circle cx="2502.9" cy="570.0" r="2.1" fill="#1b1b1b"/>
<circle cx="2509.5" cy="570.0" r="2.1" fill="#1b1b1b"/>
<text x="2400.72" y="572.00" font-size="26.90" fill="#1b1b1b" textLength="29.92" lengthAdjust="spacingAndGlyphs">59</text>
<text x="1432.84" y="610.00" font-size="26.90" fill="#1b1b1b" textLength="179.01" lengthAdjust="spacingAndGlyphs">52.12-54.13...</text>
<text x="1639.66" y="610.00" font-size="26.90" fill="#1b1b1b" textLength="116.84" lengthAdjust="spacingAndGlyphs">32.62 MB</text>
<text x="1786.05" y="610.00" font-size="26.90" fill="#1b1b1b" textLength="141.02" lengthAdjust="spacingAndGlyphs">136.78 M...</text>
<text x="1954.69" y="610.00" font-size="26.90" fill="#1b1b1b" textLength="50.93" lengthAdjust="spacingAndGlyphs">WiFi</text>
<text x="2071.78" y="610.00" font-size="26.90" fill="#1b1b1b" textLength="90.09" lengthAdjust="spacingAndGlyphs">Linksys</text>
<text x="2175.41" y="610.00" font-size="26.90" fill="#1b1b1b" textLength="65.60" lengthAdjust="spacingAndGlyphs">C0:...</text>
<circle cx="2265.8" cy="608.0" r="2.1" fill="#1b1b1b"/>
<circle cx="2272.4" cy="608.0" r="2.1" fill="#1b1b1b"/>
<circle cx="2279.0" cy="608.0" r="2.1" fill="#1b1b1b"/>
<circle cx="2311.8" cy="608.0" r="2.1" fill="#1b1b1b"/>
<circle cx="2318.4" cy="608.0" r="2.1" fill="#1b1b1b"/>
<circle cx="2325.0" cy="608.0" r="2.1" fill="#1b1b1b"/>
<circle cx="2358.3" cy="608.0" r="2.1" fill="#1b1b1b"/>
<circle cx="2364.9" cy="608.0" r="2.1" fill="#1b1b1b"/>
<circle cx="2371.5" cy="608.0" r="2.1" fill="#1b1b1b"/>
<circle cx="2450.3" cy="608.0" r="2.1" fill="#1b1b1b"/>
<circle cx="2456.9" cy="608.0" r="2.1" fill="#1b1b1b"/>
<circle cx="2463.5" cy="608.0" r="2.1" fill="#1b1b1b"/>
<circle cx="2496.3" cy="608.0" r="2.1" fill="#1b1b1b"/>
<circle cx="2502.9" cy="608.0" r="2.1" fill="#1b1b1b"/>
<circle cx="2509.5" cy="608.0" r="2.1" fill="#1b1b1b"/>
<text x="2400.72" y="610.00" font-size="26.90" fill="#1b1b1b" textLength="29.92" lengthAdjust="spacingAndGlyphs">59</text>
<text x="1432.84" y="648.00" font-size="26.90" fill="#1b1b1b" textLength="179.01" lengthAdjust="spacingAndGlyphs">50.12-52.12...</text>
<text x="1639.66" y="648.00" font-size="26.90" fill="#1b1b1b" textLength="116.84" lengthAdjust="spacingAndGlyphs">33.12 MB</text>
<text x="1786.05" y="648.00" font-size="26.90" fill="#1b1b1b" textLength="141.02" lengthAdjust="spacingAndGlyphs">138.85 M...</text>
<text x="1954.69" y="648.00" font-size="26.90" fill="#1b1b1b" textLength="50.93" lengthAdjust="spacingAndGlyphs">WiFi</text>
<text x="2071.78" y="648.00" font-size="26.90" fill="#1b1b1b" textLength="90.09" lengthAdjust="spacingAndGlyphs">Linksys</text>
<text x="2175.41" y="648.00" font-size="26.90" fill="#1b1b1b" textLength="65.60" lengthAdjust="spacingAndGlyphs">C0:...</text>
<circle cx="2265.8" cy="646.0" r="2.1" fill="#1b1b1b"/>
<circle cx="2272.4" cy="646.0" r="2.1" fill="#1b1b1b"/>
<circle cx="2279.0" cy="646.0" r="2.1" fill="#1b1b1b"/>
<circle cx="2311.8" cy="646.0" r="2.1" fill="#1b1b1b"/>
<circle cx="2318.4" cy="646.0" r="2.1" fill="#1b1b1b"/>
<circle cx="2325.0" cy="646.0" r="2.1" fill="#1b1b1b"/>
<circle cx="2358.3" cy="646.0" r="2.1" fill="#1b1b1b"/>
<circle cx="2364.9" cy="646.0" r="2.1" fill="#1b1b1b"/>
<circle cx="2371.5" cy="646.0" r="2.1" fill="#1b1b1b"/>
<circle cx="2450.3" cy="646.0" r="2.1" fill="#1b1b1b"/>
<circle cx="2456.9" cy="646.0" r="2.1" fill="#1b1b1b"/>
<circle cx="2463.5" cy="646.0" r="2.1" fill="#1b1b1b"/>
<circle cx="2496.3" cy="646.0" r="2.1" fill="#1b1b1b"/>
<circle cx="2502.9" cy="646.0" r="2.1" fill="#1b1b1b"/>
<circle cx="2509.5" cy="646.0" r="2.1" fill="#1b1b1b"/>
<text x="2400.43" y="648.00" font-size="26.90" fill="#1b1b1b" textLength="29.92" lengthAdjust="spacingAndGlyphs">60</text>
<text x="1433.33" y="686.00" font-size="26.90" fill="#1b1b1b" textLength="179.01" lengthAdjust="spacingAndGlyphs">48.11-50.12...</text>
<text x="1639.66" y="686.00" font-size="26.90" fill="#1b1b1b" textLength="116.84" lengthAdjust="spacingAndGlyphs">33.25 MB</text>
<text x="1786.05" y="686.00" font-size="26.90" fill="#1b1b1b" textLength="141.02" lengthAdjust="spacingAndGlyphs">138.57 M...</text>
<text x="1954.69" y="686.00" font-size="26.90" fill="#1b1b1b" textLength="50.93" lengthAdjust="spacingAndGlyphs">WiFi</text>
<text x="2071.78" y="686.00" font-size="26.90" fill="#1b1b1b" textLength="90.09" lengthAdjust="spacingAndGlyphs">Linksys</text>
<text x="2175.41" y="686.00" font-size="26.90" fill="#1b1b1b" textLength="65.60" lengthAdjust="spacingAndGlyphs">C0:...</text>
<circle cx="2265.8" cy="684.0" r="2.1" fill="#1b1b1b"/>
<circle cx="2272.4" cy="684.0" r="2.1" fill="#1b1b1b"/>
<circle cx="2279.0" cy="684.0" r="2.1" fill="#1b1b1b"/>
<circle cx="2311.8" cy="684.0" r="2.1" fill="#1b1b1b"/>
<circle cx="2318.4" cy="684.0" r="2.1" fill="#1b1b1b"/>
<circle cx="2325.0" cy="684.0" r="2.1" fill="#1b1b1b"/>
<circle cx="2358.3" cy="684.0" r="2.1" fill="#1b1b1b"/>
<circle cx="2364.9" cy="684.0" r="2.1" fill="#1b1b1b"/>
<circle cx="2371.5" cy="684.0" r="2.1" fill="#1b1b1b"/>
<circle cx="2450.3" cy="684.0" r="2.1" fill="#1b1b1b"/>
<circle cx="2456.9" cy="684.0" r="2.1" fill="#1b1b1b"/>
<circle cx="2463.5" cy="684.0" r="2.1" fill="#1b1b1b"/>
<circle cx="2496.3" cy="684.0" r="2.1" fill="#1b1b1b"/>
<circle cx="2502.9" cy="684.0" r="2.1" fill="#1b1b1b"/>
<circle cx="2509.5" cy="684.0" r="2.1" fill="#1b1b1b"/>
<text x="2400.43" y="686.00" font-size="26.90" fill="#1b1b1b" textLength="29.92" lengthAdjust="spacingAndGlyphs">60</text>
<text x="1433.33" y="724.00" font-size="26.90" fill="#1b1b1b" textLength="179.01" lengthAdjust="spacingAndGlyphs">46.11-48.11...</text>
<text x="1639.66" y="724.00" font-size="26.90" fill="#1b1b1b" textLength="116.84" lengthAdjust="spacingAndGlyphs">33.62 MB</text>
<text x="1786.05" y="724.00" font-size="26.90" fill="#1b1b1b" textLength="141.02" lengthAdjust="spacingAndGlyphs">140.81 M...</text>
<text x="1954.69" y="724.00" font-size="26.90" fill="#1b1b1b" textLength="50.93" lengthAdjust="spacingAndGlyphs">WiFi</text>
<text x="2071.78" y="724.00" font-size="26.90" fill="#1b1b1b" textLength="90.09" lengthAdjust="spacingAndGlyphs">Linksys</text>
<text x="2175.41" y="724.00" font-size="26.90" fill="#1b1b1b" textLength="65.60" lengthAdjust="spacingAndGlyphs">C0:...</text>
<circle cx="2265.8" cy="722.0" r="2.1" fill="#1b1b1b"/>
<circle cx="2272.4" cy="722.0" r="2.1" fill="#1b1b1b"/>
<circle cx="2279.0" cy="722.0" r="2.1" fill="#1b1b1b"/>
<circle cx="2311.8" cy="722.0" r="2.1" fill="#1b1b1b"/>
<circle cx="2318.4" cy="722.0" r="2.1" fill="#1b1b1b"/>
<circle cx="2325.0" cy="722.0" r="2.1" fill="#1b1b1b"/>
<circle cx="2358.3" cy="722.0" r="2.1" fill="#1b1b1b"/>
<circle cx="2364.9" cy="722.0" r="2.1" fill="#1b1b1b"/>
<circle cx="2371.5" cy="722.0" r="2.1" fill="#1b1b1b"/>
<circle cx="2450.3" cy="722.0" r="2.1" fill="#1b1b1b"/>
<circle cx="2456.9" cy="722.0" r="2.1" fill="#1b1b1b"/>
<circle cx="2463.5" cy="722.0" r="2.1" fill="#1b1b1b"/>
<circle cx="2496.3" cy="722.0" r="2.1" fill="#1b1b1b"/>
<circle cx="2502.9" cy="722.0" r="2.1" fill="#1b1b1b"/>
<circle cx="2509.5" cy="722.0" r="2.1" fill="#1b1b1b"/>
<text x="2400.43" y="724.00" font-size="26.90" fill="#1b1b1b" textLength="29.92" lengthAdjust="spacingAndGlyphs">60</text>
<text x="1433.33" y="762.00" font-size="26.90" fill="#1b1b1b" textLength="179.01" lengthAdjust="spacingAndGlyphs">44.10-46.11...</text>
<text x="1639.66" y="762.00" font-size="26.90" fill="#1b1b1b" textLength="116.84" lengthAdjust="spacingAndGlyphs">33.12 MB</text>
<text x="1786.05" y="762.00" font-size="26.90" fill="#1b1b1b" textLength="141.02" lengthAdjust="spacingAndGlyphs">138.44 M...</text>
<text x="1954.69" y="762.00" font-size="26.90" fill="#1b1b1b" textLength="50.93" lengthAdjust="spacingAndGlyphs">WiFi</text>
<text x="2071.78" y="762.00" font-size="26.90" fill="#1b1b1b" textLength="90.09" lengthAdjust="spacingAndGlyphs">Linksys</text>
<text x="2175.41" y="762.00" font-size="26.90" fill="#1b1b1b" textLength="65.60" lengthAdjust="spacingAndGlyphs">C0:...</text>
<circle cx="2265.8" cy="760.0" r="2.1" fill="#1b1b1b"/>
<circle cx="2272.4" cy="760.0" r="2.1" fill="#1b1b1b"/>
<circle cx="2279.0" cy="760.0" r="2.1" fill="#1b1b1b"/>
<circle cx="2311.8" cy="760.0" r="2.1" fill="#1b1b1b"/>
<circle cx="2318.4" cy="760.0" r="2.1" fill="#1b1b1b"/>
<circle cx="2325.0" cy="760.0" r="2.1" fill="#1b1b1b"/>
<circle cx="2358.3" cy="760.0" r="2.1" fill="#1b1b1b"/>
<circle cx="2364.9" cy="760.0" r="2.1" fill="#1b1b1b"/>
<circle cx="2371.5" cy="760.0" r="2.1" fill="#1b1b1b"/>
<circle cx="2450.3" cy="760.0" r="2.1" fill="#1b1b1b"/>
<circle cx="2456.9" cy="760.0" r="2.1" fill="#1b1b1b"/>
<circle cx="2463.5" cy="760.0" r="2.1" fill="#1b1b1b"/>
<circle cx="2496.3" cy="760.0" r="2.1" fill="#1b1b1b"/>
<circle cx="2502.9" cy="760.0" r="2.1" fill="#1b1b1b"/>
<circle cx="2509.5" cy="760.0" r="2.1" fill="#1b1b1b"/>
<text x="2400.43" y="762.00" font-size="26.90" fill="#1b1b1b" textLength="29.92" lengthAdjust="spacingAndGlyphs">60</text>
<text x="1433.33" y="800.00" font-size="26.90" fill="#1b1b1b" textLength="179.01" lengthAdjust="spacingAndGlyphs">42.10-44.10...</text>
<text x="1639.66" y="800.00" font-size="26.90" fill="#1b1b1b" textLength="116.84" lengthAdjust="spacingAndGlyphs">33.75 MB</text>
<text x="1786.05" y="800.00" font-size="26.90" fill="#1b1b1b" textLength="141.02" lengthAdjust="spacingAndGlyphs">141.35 M...</text>
<text x="1954.69" y="800.00" font-size="26.90" fill="#1b1b1b" textLength="50.93" lengthAdjust="spacingAndGlyphs">WiFi</text>
<text x="2071.78" y="800.00" font-size="26.90" fill="#1b1b1b" textLength="90.09" lengthAdjust="spacingAndGlyphs">Linksys</text>
<text x="2175.41" y="800.00" font-size="26.90" fill="#1b1b1b" textLength="65.60" lengthAdjust="spacingAndGlyphs">C0:...</text>
<circle cx="2265.8" cy="798.0" r="2.1" fill="#1b1b1b"/>
<circle cx="2272.4" cy="798.0" r="2.1" fill="#1b1b1b"/>
<circle cx="2279.0" cy="798.0" r="2.1" fill="#1b1b1b"/>
<circle cx="2311.8" cy="798.0" r="2.1" fill="#1b1b1b"/>
<circle cx="2318.4" cy="798.0" r="2.1" fill="#1b1b1b"/>
<circle cx="2325.0" cy="798.0" r="2.1" fill="#1b1b1b"/>
<circle cx="2358.3" cy="798.0" r="2.1" fill="#1b1b1b"/>
<circle cx="2364.9" cy="798.0" r="2.1" fill="#1b1b1b"/>
<circle cx="2371.5" cy="798.0" r="2.1" fill="#1b1b1b"/>
<circle cx="2450.3" cy="798.0" r="2.1" fill="#1b1b1b"/>
<circle cx="2456.9" cy="798.0" r="2.1" fill="#1b1b1b"/>
<circle cx="2463.5" cy="798.0" r="2.1" fill="#1b1b1b"/>
<circle cx="2496.3" cy="798.0" r="2.1" fill="#1b1b1b"/>
<circle cx="2502.9" cy="798.0" r="2.1" fill="#1b1b1b"/>
<circle cx="2509.5" cy="798.0" r="2.1" fill="#1b1b1b"/>
<text x="2400.72" y="800.00" font-size="26.90" fill="#1b1b1b" textLength="29.92" lengthAdjust="spacingAndGlyphs">59</text>
<text x="1433.33" y="838.00" font-size="26.90" fill="#1b1b1b" textLength="179.01" lengthAdjust="spacingAndGlyphs">40.09-42.10...</text>
<text x="1639.66" y="838.00" font-size="26.90" fill="#1b1b1b" textLength="116.84" lengthAdjust="spacingAndGlyphs">33.25 MB</text>
<text x="1786.05" y="838.00" font-size="26.90" fill="#1b1b1b" textLength="141.02" lengthAdjust="spacingAndGlyphs">138.79 M...</text>
<text x="1954.69" y="838.00" font-size="26.90" fill="#1b1b1b" textLength="50.93" lengthAdjust="spacingAndGlyphs">WiFi</text>
<text x="2071.78" y="838.00" font-size="26.90" fill="#1b1b1b" textLength="90.09" lengthAdjust="spacingAndGlyphs">Linksys</text>
<text x="2175.41" y="838.00" font-size="26.90" fill="#1b1b1b" textLength="65.60" lengthAdjust="spacingAndGlyphs">C0:...</text>
<circle cx="2265.8" cy="836.0" r="2.1" fill="#1b1b1b"/>
<circle cx="2272.4" cy="836.0" r="2.1" fill="#1b1b1b"/>
<circle cx="2279.0" cy="836.0" r="2.1" fill="#1b1b1b"/>
<circle cx="2311.8" cy="836.0" r="2.1" fill="#1b1b1b"/>
<circle cx="2318.4" cy="836.0" r="2.1" fill="#1b1b1b"/>
<circle cx="2325.0" cy="836.0" r="2.1" fill="#1b1b1b"/>
<circle cx="2358.3" cy="836.0" r="2.1" fill="#1b1b1b"/>
<circle cx="2364.9" cy="836.0" r="2.1" fill="#1b1b1b"/>
<circle cx="2371.5" cy="836.0" r="2.1" fill="#1b1b1b"/>
<circle cx="2450.3" cy="836.0" r="2.1" fill="#1b1b1b"/>
<circle cx="2456.9" cy="836.0" r="2.1" fill="#1b1b1b"/>
<circle cx="2463.5" cy="836.0" r="2.1" fill="#1b1b1b"/>
<circle cx="2496.3" cy="836.0" r="2.1" fill="#1b1b1b"/>
<circle cx="2502.9" cy="836.0" r="2.1" fill="#1b1b1b"/>
<circle cx="2509.5" cy="836.0" r="2.1" fill="#1b1b1b"/>
<text x="2400.72" y="838.00" font-size="26.90" fill="#1b1b1b" textLength="29.92" lengthAdjust="spacingAndGlyphs">59</text>
<text x="1432.90" y="876.00" font-size="26.90" fill="#1b1b1b" textLength="179.01" lengthAdjust="spacingAndGlyphs">38.08-40.09...</text>
<text x="1639.66" y="876.00" font-size="26.90" fill="#1b1b1b" textLength="116.84" lengthAdjust="spacingAndGlyphs">32.62 MB</text>
<text x="1786.05" y="876.00" font-size="26.90" fill="#1b1b1b" textLength="141.02" lengthAdjust="spacingAndGlyphs">136.47 M...</text>
<text x="1954.69" y="876.00" font-size="26.90" fill="#1b1b1b" textLength="50.93" lengthAdjust="spacingAndGlyphs">WiFi</text>
<text x="2071.78" y="876.00" font-size="26.90" fill="#1b1b1b" textLength="90.09" lengthAdjust="spacingAndGlyphs">Linksys</text>
<text x="2175.41" y="876.00" font-size="26.90" fill="#1b1b1b" textLength="65.60" lengthAdjust="spacingAndGlyphs">C0:...</text>
<circle cx="2265.8" cy="874.0" r="2.1" fill="#1b1b1b"/>
<circle cx="2272.4" cy="874.0" r="2.1" fill="#1b1b1b"/>
<circle cx="2279.0" cy="874.0" r="2.1" fill="#1b1b1b"/>
<circle cx="2311.8" cy="874.0" r="2.1" fill="#1b1b1b"/>
<circle cx="2318.4" cy="874.0" r="2.1" fill="#1b1b1b"/>
<circle cx="2325.0" cy="874.0" r="2.1" fill="#1b1b1b"/>
<circle cx="2358.3" cy="874.0" r="2.1" fill="#1b1b1b"/>
<circle cx="2364.9" cy="874.0" r="2.1" fill="#1b1b1b"/>
<circle cx="2371.5" cy="874.0" r="2.1" fill="#1b1b1b"/>
<circle cx="2450.3" cy="874.0" r="2.1" fill="#1b1b1b"/>
<circle cx="2456.9" cy="874.0" r="2.1" fill="#1b1b1b"/>
<circle cx="2463.5" cy="874.0" r="2.1" fill="#1b1b1b"/>
<circle cx="2496.3" cy="874.0" r="2.1" fill="#1b1b1b"/>
<circle cx="2502.9" cy="874.0" r="2.1" fill="#1b1b1b"/>
<circle cx="2509.5" cy="874.0" r="2.1" fill="#1b1b1b"/>
<text x="2400.43" y="876.00" font-size="26.90" fill="#1b1b1b" textLength="29.92" lengthAdjust="spacingAndGlyphs">60</text>
<text x="1432.90" y="914.00" font-size="26.90" fill="#1b1b1b" textLength="179.01" lengthAdjust="spacingAndGlyphs">36.08-38.08...</text>
<text x="1639.66" y="914.00" font-size="26.90" fill="#1b1b1b" textLength="116.84" lengthAdjust="spacingAndGlyphs">33.00 MB</text>
<text x="1786.05" y="914.00" font-size="26.90" fill="#1b1b1b" textLength="141.02" lengthAdjust="spacingAndGlyphs">138.11 M...</text>
<text x="1954.69" y="914.00" font-size="26.90" fill="#1b1b1b" textLength="50.93" lengthAdjust="spacingAndGlyphs">WiFi</text>
<text x="2071.78" y="914.00" font-size="26.90" fill="#1b1b1b" textLength="90.09" lengthAdjust="spacingAndGlyphs">Linksys</text>
<text x="2175.41" y="914.00" font-size="26.90" fill="#1b1b1b" textLength="65.60" lengthAdjust="spacingAndGlyphs">C0:...</text>
<circle cx="2265.8" cy="912.0" r="2.1" fill="#1b1b1b"/>
<circle cx="2272.4" cy="912.0" r="2.1" fill="#1b1b1b"/>
<circle cx="2279.0" cy="912.0" r="2.1" fill="#1b1b1b"/>
<circle cx="2311.8" cy="912.0" r="2.1" fill="#1b1b1b"/>
<circle cx="2318.4" cy="912.0" r="2.1" fill="#1b1b1b"/>
<circle cx="2325.0" cy="912.0" r="2.1" fill="#1b1b1b"/>
<circle cx="2358.3" cy="912.0" r="2.1" fill="#1b1b1b"/>
<circle cx="2364.9" cy="912.0" r="2.1" fill="#1b1b1b"/>
<circle cx="2371.5" cy="912.0" r="2.1" fill="#1b1b1b"/>
<circle cx="2450.3" cy="912.0" r="2.1" fill="#1b1b1b"/>
<circle cx="2456.9" cy="912.0" r="2.1" fill="#1b1b1b"/>
<circle cx="2463.5" cy="912.0" r="2.1" fill="#1b1b1b"/>
<circle cx="2496.3" cy="912.0" r="2.1" fill="#1b1b1b"/>
<circle cx="2502.9" cy="912.0" r="2.1" fill="#1b1b1b"/>
<circle cx="2509.5" cy="912.0" r="2.1" fill="#1b1b1b"/>
<text x="2400.43" y="914.00" font-size="26.90" fill="#1b1b1b" textLength="29.92" lengthAdjust="spacingAndGlyphs">61</text>
<text x="1432.90" y="952.00" font-size="26.90" fill="#1b1b1b" textLength="179.01" lengthAdjust="spacingAndGlyphs">34.08-36.08...</text>
<text x="1639.33" y="952.00" font-size="26.90" fill="#1b1b1b" textLength="116.84" lengthAdjust="spacingAndGlyphs">29.38 MB</text>
<text x="1786.05" y="952.00" font-size="26.90" fill="#1b1b1b" textLength="141.02" lengthAdjust="spacingAndGlyphs">123.19 M...</text>
<text x="1954.69" y="952.00" font-size="26.90" fill="#1b1b1b" textLength="50.93" lengthAdjust="spacingAndGlyphs">WiFi</text>
<text x="2071.78" y="952.00" font-size="26.90" fill="#1b1b1b" textLength="90.09" lengthAdjust="spacingAndGlyphs">Linksys</text>
<text x="2175.41" y="952.00" font-size="26.90" fill="#1b1b1b" textLength="65.60" lengthAdjust="spacingAndGlyphs">C0:...</text>
<circle cx="2265.8" cy="950.0" r="2.1" fill="#1b1b1b"/>
<circle cx="2272.4" cy="950.0" r="2.1" fill="#1b1b1b"/>
<circle cx="2279.0" cy="950.0" r="2.1" fill="#1b1b1b"/>
<circle cx="2311.8" cy="950.0" r="2.1" fill="#1b1b1b"/>
<circle cx="2318.4" cy="950.0" r="2.1" fill="#1b1b1b"/>
<circle cx="2325.0" cy="950.0" r="2.1" fill="#1b1b1b"/>
<circle cx="2358.3" cy="950.0" r="2.1" fill="#1b1b1b"/>
<circle cx="2364.9" cy="950.0" r="2.1" fill="#1b1b1b"/>
<circle cx="2371.5" cy="950.0" r="2.1" fill="#1b1b1b"/>
<circle cx="2450.3" cy="950.0" r="2.1" fill="#1b1b1b"/>
<circle cx="2456.9" cy="950.0" r="2.1" fill="#1b1b1b"/>
<circle cx="2463.5" cy="950.0" r="2.1" fill="#1b1b1b"/>
<circle cx="2496.3" cy="950.0" r="2.1" fill="#1b1b1b"/>
<circle cx="2502.9" cy="950.0" r="2.1" fill="#1b1b1b"/>
<circle cx="2509.5" cy="950.0" r="2.1" fill="#1b1b1b"/>
<text x="2400.43" y="952.00" font-size="26.90" fill="#1b1b1b" textLength="29.92" lengthAdjust="spacingAndGlyphs">61</text>
<text x="1432.90" y="990.00" font-size="26.90" fill="#1b1b1b" textLength="179.01" lengthAdjust="spacingAndGlyphs">32.07-34.08...</text>
<text x="1639.66" y="990.00" font-size="26.90" fill="#1b1b1b" textLength="116.84" lengthAdjust="spacingAndGlyphs">33.50 MB</text>
<text x="1786.05" y="990.00" font-size="26.90" fill="#1b1b1b" textLength="141.02" lengthAdjust="spacingAndGlyphs">140.11 M...</text>
<text x="1954.69" y="990.00" font-size="26.90" fill="#1b1b1b" textLength="50.93" lengthAdjust="spacingAndGlyphs">WiFi</text>
<text x="2071.78" y="990.00" font-size="26.90" fill="#1b1b1b" textLength="90.09" lengthAdjust="spacingAndGlyphs">Linksys</text>
<text x="2175.41" y="990.00" font-size="26.90" fill="#1b1b1b" textLength="65.60" lengthAdjust="spacingAndGlyphs">C0:...</text>
<circle cx="2265.8" cy="988.0" r="2.1" fill="#1b1b1b"/>
<circle cx="2272.4" cy="988.0" r="2.1" fill="#1b1b1b"/>
<circle cx="2279.0" cy="988.0" r="2.1" fill="#1b1b1b"/>
<circle cx="2311.8" cy="988.0" r="2.1" fill="#1b1b1b"/>
<circle cx="2318.4" cy="988.0" r="2.1" fill="#1b1b1b"/>
<circle cx="2325.0" cy="988.0" r="2.1" fill="#1b1b1b"/>
<circle cx="2358.3" cy="988.0" r="2.1" fill="#1b1b1b"/>
<circle cx="2364.9" cy="988.0" r="2.1" fill="#1b1b1b"/>
<circle cx="2371.5" cy="988.0" r="2.1" fill="#1b1b1b"/>
<circle cx="2450.3" cy="988.0" r="2.1" fill="#1b1b1b"/>
<circle cx="2456.9" cy="988.0" r="2.1" fill="#1b1b1b"/>
<circle cx="2463.5" cy="988.0" r="2.1" fill="#1b1b1b"/>
<circle cx="2496.3" cy="988.0" r="2.1" fill="#1b1b1b"/>
<circle cx="2502.9" cy="988.0" r="2.1" fill="#1b1b1b"/>
<circle cx="2509.5" cy="988.0" r="2.1" fill="#1b1b1b"/>
<text x="2400.43" y="990.00" font-size="26.90" fill="#1b1b1b" textLength="29.92" lengthAdjust="spacingAndGlyphs">61</text>
<text x="1432.90" y="1028.00" font-size="26.90" fill="#1b1b1b" textLength="179.01" lengthAdjust="spacingAndGlyphs">30.07-32.07...</text>
<text x="1639.66" y="1028.00" font-size="26.90" fill="#1b1b1b" textLength="116.84" lengthAdjust="spacingAndGlyphs">33.38 MB</text>
<text x="1786.05" y="1028.00" font-size="26.90" fill="#1b1b1b" textLength="141.02" lengthAdjust="spacingAndGlyphs">139.62 M...</text>
<text x="1954.69" y="1028.00" font-size="26.90" fill="#1b1b1b" textLength="50.93" lengthAdjust="spacingAndGlyphs">WiFi</text>
<text x="2071.78" y="1028.00" font-size="26.90" fill="#1b1b1b" textLength="90.09" lengthAdjust="spacingAndGlyphs">Linksys</text>
<text x="2175.41" y="1028.00" font-size="26.90" fill="#1b1b1b" textLength="65.60" lengthAdjust="spacingAndGlyphs">C0:...</text>
<circle cx="2265.8" cy="1026.0" r="2.1" fill="#1b1b1b"/>
<circle cx="2272.4" cy="1026.0" r="2.1" fill="#1b1b1b"/>
<circle cx="2279.0" cy="1026.0" r="2.1" fill="#1b1b1b"/>
<circle cx="2311.8" cy="1026.0" r="2.1" fill="#1b1b1b"/>
<circle cx="2318.4" cy="1026.0" r="2.1" fill="#1b1b1b"/>
<circle cx="2325.0" cy="1026.0" r="2.1" fill="#1b1b1b"/>
<circle cx="2358.3" cy="1026.0" r="2.1" fill="#1b1b1b"/>
<circle cx="2364.9" cy="1026.0" r="2.1" fill="#1b1b1b"/>
<circle cx="2371.5" cy="1026.0" r="2.1" fill="#1b1b1b"/>
<circle cx="2450.3" cy="1026.0" r="2.1" fill="#1b1b1b"/>
<circle cx="2456.9" cy="1026.0" r="2.1" fill="#1b1b1b"/>
<circle cx="2463.5" cy="1026.0" r="2.1" fill="#1b1b1b"/>
<circle cx="2496.3" cy="1026.0" r="2.1" fill="#1b1b1b"/>
<circle cx="2502.9" cy="1026.0" r="2.1" fill="#1b1b1b"/>
<circle cx="2509.5" cy="1026.0" r="2.1" fill="#1b1b1b"/>
<text x="2400.43" y="1028.00" font-size="26.90" fill="#1b1b1b" textLength="29.92" lengthAdjust="spacingAndGlyphs">60</text>
<text x="1432.54" y="1066.00" font-size="26.90" fill="#1b1b1b" textLength="179.01" lengthAdjust="spacingAndGlyphs">28.06-30.07...</text>
<text x="1639.66" y="1066.00" font-size="26.90" fill="#1b1b1b" textLength="116.84" lengthAdjust="spacingAndGlyphs">32.75 MB</text>
<text x="1786.05" y="1066.00" font-size="26.90" fill="#1b1b1b" textLength="141.02" lengthAdjust="spacingAndGlyphs">136.91 M...</text>
<text x="1954.69" y="1066.00" font-size="26.90" fill="#1b1b1b" textLength="50.93" lengthAdjust="spacingAndGlyphs">WiFi</text>
<text x="2071.78" y="1066.00" font-size="26.90" fill="#1b1b1b" textLength="90.09" lengthAdjust="spacingAndGlyphs">Linksys</text>
<text x="2175.41" y="1066.00" font-size="26.90" fill="#1b1b1b" textLength="65.60" lengthAdjust="spacingAndGlyphs">C0:...</text>
<circle cx="2265.8" cy="1064.0" r="2.1" fill="#1b1b1b"/>
<circle cx="2272.4" cy="1064.0" r="2.1" fill="#1b1b1b"/>
<circle cx="2279.0" cy="1064.0" r="2.1" fill="#1b1b1b"/>
<circle cx="2311.8" cy="1064.0" r="2.1" fill="#1b1b1b"/>
<circle cx="2318.4" cy="1064.0" r="2.1" fill="#1b1b1b"/>
<circle cx="2325.0" cy="1064.0" r="2.1" fill="#1b1b1b"/>
<circle cx="2358.3" cy="1064.0" r="2.1" fill="#1b1b1b"/>
<circle cx="2364.9" cy="1064.0" r="2.1" fill="#1b1b1b"/>
<circle cx="2371.5" cy="1064.0" r="2.1" fill="#1b1b1b"/>
<circle cx="2450.3" cy="1064.0" r="2.1" fill="#1b1b1b"/>
<circle cx="2456.9" cy="1064.0" r="2.1" fill="#1b1b1b"/>
<circle cx="2463.5" cy="1064.0" r="2.1" fill="#1b1b1b"/>
<circle cx="2496.3" cy="1064.0" r="2.1" fill="#1b1b1b"/>
<circle cx="2502.9" cy="1064.0" r="2.1" fill="#1b1b1b"/>
<circle cx="2509.5" cy="1064.0" r="2.1" fill="#1b1b1b"/>
<text x="2400.72" y="1066.00" font-size="26.90" fill="#1b1b1b" textLength="29.92" lengthAdjust="spacingAndGlyphs">59</text>
<text x="1432.54" y="1104.00" font-size="26.90" fill="#1b1b1b" textLength="179.01" lengthAdjust="spacingAndGlyphs">26.06-28.06...</text>
<text x="1639.66" y="1104.00" font-size="26.90" fill="#1b1b1b" textLength="116.84" lengthAdjust="spacingAndGlyphs">32.88 MB</text>
<text x="1786.05" y="1104.00" font-size="26.90" fill="#1b1b1b" textLength="141.02" lengthAdjust="spacingAndGlyphs">137.67 M...</text>
<text x="1954.69" y="1104.00" font-size="26.90" fill="#1b1b1b" textLength="50.93" lengthAdjust="spacingAndGlyphs">WiFi</text>
<text x="2071.78" y="1104.00" font-size="26.90" fill="#1b1b1b" textLength="90.09" lengthAdjust="spacingAndGlyphs">Linksys</text>
<text x="2175.41" y="1104.00" font-size="26.90" fill="#1b1b1b" textLength="65.60" lengthAdjust="spacingAndGlyphs">C0:...</text>
<circle cx="2265.8" cy="1102.0" r="2.1" fill="#1b1b1b"/>
<circle cx="2272.4" cy="1102.0" r="2.1" fill="#1b1b1b"/>
<circle cx="2279.0" cy="1102.0" r="2.1" fill="#1b1b1b"/>
<circle cx="2311.8" cy="1102.0" r="2.1" fill="#1b1b1b"/>
<circle cx="2318.4" cy="1102.0" r="2.1" fill="#1b1b1b"/>
<circle cx="2325.0" cy="1102.0" r="2.1" fill="#1b1b1b"/>
<circle cx="2358.3" cy="1102.0" r="2.1" fill="#1b1b1b"/>
<circle cx="2364.9" cy="1102.0" r="2.1" fill="#1b1b1b"/>
<circle cx="2371.5" cy="1102.0" r="2.1" fill="#1b1b1b"/>
<circle cx="2450.3" cy="1102.0" r="2.1" fill="#1b1b1b"/>
<circle cx="2456.9" cy="1102.0" r="2.1" fill="#1b1b1b"/>
<circle cx="2463.5" cy="1102.0" r="2.1" fill="#1b1b1b"/>
<circle cx="2496.3" cy="1102.0" r="2.1" fill="#1b1b1b"/>
<circle cx="2502.9" cy="1102.0" r="2.1" fill="#1b1b1b"/>
<circle cx="2509.5" cy="1102.0" r="2.1" fill="#1b1b1b"/>
<text x="2400.72" y="1104.00" font-size="26.90" fill="#1b1b1b" textLength="29.92" lengthAdjust="spacingAndGlyphs">59</text>
<text x="1432.54" y="1142.00" font-size="26.90" fill="#1b1b1b" textLength="179.01" lengthAdjust="spacingAndGlyphs">24.05-26.06...</text>
<text x="1639.66" y="1142.00" font-size="26.90" fill="#1b1b1b" textLength="116.84" lengthAdjust="spacingAndGlyphs">33.00 MB</text>
<text x="1786.05" y="1142.00" font-size="26.90" fill="#1b1b1b" textLength="141.02" lengthAdjust="spacingAndGlyphs">137.69 M...</text>
<text x="1954.69" y="1142.00" font-size="26.90" fill="#1b1b1b" textLength="50.93" lengthAdjust="spacingAndGlyphs">WiFi</text>
<text x="2071.78" y="1142.00" font-size="26.90" fill="#1b1b1b" textLength="90.09" lengthAdjust="spacingAndGlyphs">Linksys</text>
<text x="2175.41" y="1142.00" font-size="26.90" fill="#1b1b1b" textLength="65.60" lengthAdjust="spacingAndGlyphs">C0:...</text>
<circle cx="2265.8" cy="1140.0" r="2.1" fill="#1b1b1b"/>
<circle cx="2272.4" cy="1140.0" r="2.1" fill="#1b1b1b"/>
<circle cx="2279.0" cy="1140.0" r="2.1" fill="#1b1b1b"/>
<circle cx="2311.8" cy="1140.0" r="2.1" fill="#1b1b1b"/>
<circle cx="2318.4" cy="1140.0" r="2.1" fill="#1b1b1b"/>
<circle cx="2325.0" cy="1140.0" r="2.1" fill="#1b1b1b"/>
<circle cx="2358.3" cy="1140.0" r="2.1" fill="#1b1b1b"/>
<circle cx="2364.9" cy="1140.0" r="2.1" fill="#1b1b1b"/>
<circle cx="2371.5" cy="1140.0" r="2.1" fill="#1b1b1b"/>
<circle cx="2450.3" cy="1140.0" r="2.1" fill="#1b1b1b"/>
<circle cx="2456.9" cy="1140.0" r="2.1" fill="#1b1b1b"/>
<circle cx="2463.5" cy="1140.0" r="2.1" fill="#1b1b1b"/>
<circle cx="2496.3" cy="1140.0" r="2.1" fill="#1b1b1b"/>
<circle cx="2502.9" cy="1140.0" r="2.1" fill="#1b1b1b"/>
<circle cx="2509.5" cy="1140.0" r="2.1" fill="#1b1b1b"/>
<text x="2400.72" y="1142.00" font-size="26.90" fill="#1b1b1b" textLength="29.92" lengthAdjust="spacingAndGlyphs">59</text>
<text x="1432.54" y="1180.00" font-size="26.90" fill="#1b1b1b" textLength="179.01" lengthAdjust="spacingAndGlyphs">22.04-24.05...</text>
<text x="1639.66" y="1180.00" font-size="26.90" fill="#1b1b1b" textLength="116.84" lengthAdjust="spacingAndGlyphs">31.88 MB</text>
<text x="1786.05" y="1180.00" font-size="26.90" fill="#1b1b1b" textLength="141.02" lengthAdjust="spacingAndGlyphs">133.28 M...</text>
<text x="1954.69" y="1180.00" font-size="26.90" fill="#1b1b1b" textLength="50.93" lengthAdjust="spacingAndGlyphs">WiFi</text>
<text x="2071.78" y="1180.00" font-size="26.90" fill="#1b1b1b" textLength="90.09" lengthAdjust="spacingAndGlyphs">Linksys</text>
<text x="2175.41" y="1180.00" font-size="26.90" fill="#1b1b1b" textLength="65.60" lengthAdjust="spacingAndGlyphs">C0:...</text>
<circle cx="2265.8" cy="1178.0" r="2.1" fill="#1b1b1b"/>
<circle cx="2272.4" cy="1178.0" r="2.1" fill="#1b1b1b"/>
<circle cx="2279.0" cy="1178.0" r="2.1" fill="#1b1b1b"/>
<circle cx="2311.8" cy="1178.0" r="2.1" fill="#1b1b1b"/>
<circle cx="2318.4" cy="1178.0" r="2.1" fill="#1b1b1b"/>
<circle cx="2325.0" cy="1178.0" r="2.1" fill="#1b1b1b"/>
<circle cx="2358.3" cy="1178.0" r="2.1" fill="#1b1b1b"/>
<circle cx="2364.9" cy="1178.0" r="2.1" fill="#1b1b1b"/>
<circle cx="2371.5" cy="1178.0" r="2.1" fill="#1b1b1b"/>
<circle cx="2450.3" cy="1178.0" r="2.1" fill="#1b1b1b"/>
<circle cx="2456.9" cy="1178.0" r="2.1" fill="#1b1b1b"/>
<circle cx="2463.5" cy="1178.0" r="2.1" fill="#1b1b1b"/>
<circle cx="2496.3" cy="1178.0" r="2.1" fill="#1b1b1b"/>
<circle cx="2502.9" cy="1178.0" r="2.1" fill="#1b1b1b"/>
<circle cx="2509.5" cy="1178.0" r="2.1" fill="#1b1b1b"/>
<text x="2400.72" y="1180.00" font-size="26.90" fill="#1b1b1b" textLength="29.92" lengthAdjust="spacingAndGlyphs">59</text>
<text x="1432.54" y="1218.00" font-size="26.90" fill="#1b1b1b" textLength="179.01" lengthAdjust="spacingAndGlyphs">20.04-22.04...</text>
<text x="1639.66" y="1218.00" font-size="26.90" fill="#1b1b1b" textLength="116.84" lengthAdjust="spacingAndGlyphs">31.75 MB</text>
<text x="1786.05" y="1218.00" font-size="26.90" fill="#1b1b1b" textLength="141.02" lengthAdjust="spacingAndGlyphs">133.15 M...</text>
<text x="1954.69" y="1218.00" font-size="26.90" fill="#1b1b1b" textLength="50.93" lengthAdjust="spacingAndGlyphs">WiFi</text>
<text x="2071.78" y="1218.00" font-size="26.90" fill="#1b1b1b" textLength="90.09" lengthAdjust="spacingAndGlyphs">Linksys</text>
<text x="2175.41" y="1218.00" font-size="26.90" fill="#1b1b1b" textLength="65.60" lengthAdjust="spacingAndGlyphs">C0:...</text>
<circle cx="2265.8" cy="1216.0" r="2.1" fill="#1b1b1b"/>
<circle cx="2272.4" cy="1216.0" r="2.1" fill="#1b1b1b"/>
<circle cx="2279.0" cy="1216.0" r="2.1" fill="#1b1b1b"/>
<circle cx="2311.8" cy="1216.0" r="2.1" fill="#1b1b1b"/>
<circle cx="2318.4" cy="1216.0" r="2.1" fill="#1b1b1b"/>
<circle cx="2325.0" cy="1216.0" r="2.1" fill="#1b1b1b"/>
<circle cx="2358.3" cy="1216.0" r="2.1" fill="#1b1b1b"/>
<circle cx="2364.9" cy="1216.0" r="2.1" fill="#1b1b1b"/>
<circle cx="2371.5" cy="1216.0" r="2.1" fill="#1b1b1b"/>
<circle cx="2450.3" cy="1216.0" r="2.1" fill="#1b1b1b"/>
<circle cx="2456.9" cy="1216.0" r="2.1" fill="#1b1b1b"/>
<circle cx="2463.5" cy="1216.0" r="2.1" fill="#1b1b1b"/>
<circle cx="2496.3" cy="1216.0" r="2.1" fill="#1b1b1b"/>
<circle cx="2502.9" cy="1216.0" r="2.1" fill="#1b1b1b"/>
<circle cx="2509.5" cy="1216.0" r="2.1" fill="#1b1b1b"/>
<text x="2400.72" y="1218.00" font-size="26.90" fill="#1b1b1b" textLength="29.92" lengthAdjust="spacingAndGlyphs">59</text>
<text x="1431.79" y="1256.00" font-size="26.90" fill="#1b1b1b" textLength="179.01" lengthAdjust="spacingAndGlyphs">18.04-20.04...</text>
<text x="1639.66" y="1256.00" font-size="26.90" fill="#1b1b1b" textLength="116.84" lengthAdjust="spacingAndGlyphs">34.25 MB</text>
<text x="1786.05" y="1256.00" font-size="26.90" fill="#1b1b1b" textLength="141.02" lengthAdjust="spacingAndGlyphs">143.52 M...</text>
<text x="1954.69" y="1256.00" font-size="26.90" fill="#1b1b1b" textLength="50.93" lengthAdjust="spacingAndGlyphs">WiFi</text>
<text x="2071.78" y="1256.00" font-size="26.90" fill="#1b1b1b" textLength="90.09" lengthAdjust="spacingAndGlyphs">Linksys</text>
<text x="2175.41" y="1256.00" font-size="26.90" fill="#1b1b1b" textLength="65.60" lengthAdjust="spacingAndGlyphs">C0:...</text>
<circle cx="2265.8" cy="1254.0" r="2.1" fill="#1b1b1b"/>
<circle cx="2272.4" cy="1254.0" r="2.1" fill="#1b1b1b"/>
<circle cx="2279.0" cy="1254.0" r="2.1" fill="#1b1b1b"/>
<circle cx="2311.8" cy="1254.0" r="2.1" fill="#1b1b1b"/>
<circle cx="2318.4" cy="1254.0" r="2.1" fill="#1b1b1b"/>
<circle cx="2325.0" cy="1254.0" r="2.1" fill="#1b1b1b"/>
<circle cx="2358.3" cy="1254.0" r="2.1" fill="#1b1b1b"/>
<circle cx="2364.9" cy="1254.0" r="2.1" fill="#1b1b1b"/>
<circle cx="2371.5" cy="1254.0" r="2.1" fill="#1b1b1b"/>
<circle cx="2450.3" cy="1254.0" r="2.1" fill="#1b1b1b"/>
<circle cx="2456.9" cy="1254.0" r="2.1" fill="#1b1b1b"/>
<circle cx="2463.5" cy="1254.0" r="2.1" fill="#1b1b1b"/>
<circle cx="2496.3" cy="1254.0" r="2.1" fill="#1b1b1b"/>
<circle cx="2502.9" cy="1254.0" r="2.1" fill="#1b1b1b"/>
<circle cx="2509.5" cy="1254.0" r="2.1" fill="#1b1b1b"/>
<text x="2400.72" y="1256.00" font-size="26.90" fill="#1b1b1b" textLength="29.92" lengthAdjust="spacingAndGlyphs">59</text>
<text x="1431.79" y="1294.00" font-size="26.90" fill="#1b1b1b" textLength="179.01" lengthAdjust="spacingAndGlyphs">16.04-18.04...</text>
<text x="1639.66" y="1294.00" font-size="26.90" fill="#1b1b1b" textLength="116.84" lengthAdjust="spacingAndGlyphs">33.38 MB</text>
<text x="1786.05" y="1294.00" font-size="26.90" fill="#1b1b1b" textLength="141.02" lengthAdjust="spacingAndGlyphs">139.87 M...</text>
<text x="1954.69" y="1294.00" font-size="26.90" fill="#1b1b1b" textLength="50.93" lengthAdjust="spacingAndGlyphs">WiFi</text>
<text x="2071.78" y="1294.00" font-size="26.90" fill="#1b1b1b" textLength="90.09" lengthAdjust="spacingAndGlyphs">Linksys</text>
<text x="2175.41" y="1294.00" font-size="26.90" fill="#1b1b1b" textLength="65.60" lengthAdjust="spacingAndGlyphs">C0:...</text>
<circle cx="2265.8" cy="1292.0" r="2.1" fill="#1b1b1b"/>
<circle cx="2272.4" cy="1292.0" r="2.1" fill="#1b1b1b"/>
<circle cx="2279.0" cy="1292.0" r="2.1" fill="#1b1b1b"/>
<circle cx="2311.8" cy="1292.0" r="2.1" fill="#1b1b1b"/>
<circle cx="2318.4" cy="1292.0" r="2.1" fill="#1b1b1b"/>
<circle cx="2325.0" cy="1292.0" r="2.1" fill="#1b1b1b"/>
<circle cx="2358.3" cy="1292.0" r="2.1" fill="#1b1b1b"/>
<circle cx="2364.9" cy="1292.0" r="2.1" fill="#1b1b1b"/>
<circle cx="2371.5" cy="1292.0" r="2.1" fill="#1b1b1b"/>
<circle cx="2450.3" cy="1292.0" r="2.1" fill="#1b1b1b"/>
<circle cx="2456.9" cy="1292.0" r="2.1" fill="#1b1b1b"/>
<circle cx="2463.5" cy="1292.0" r="2.1" fill="#1b1b1b"/>
<circle cx="2496.3" cy="1292.0" r="2.1" fill="#1b1b1b"/>
<circle cx="2502.9" cy="1292.0" r="2.1" fill="#1b1b1b"/>
<circle cx="2509.5" cy="1292.0" r="2.1" fill="#1b1b1b"/>
<text x="2400.72" y="1294.00" font-size="26.90" fill="#1b1b1b" textLength="29.92" lengthAdjust="spacingAndGlyphs">59</text>
<text x="1431.79" y="1332.00" font-size="26.90" fill="#1b1b1b" textLength="179.01" lengthAdjust="spacingAndGlyphs">14.04-16.04...</text>
<text x="1639.66" y="1332.00" font-size="26.90" fill="#1b1b1b" textLength="116.84" lengthAdjust="spacingAndGlyphs">33.62 MB</text>
<text x="1786.05" y="1332.00" font-size="26.90" fill="#1b1b1b" textLength="141.02" lengthAdjust="spacingAndGlyphs">140.94 M...</text>
<text x="1954.69" y="1332.00" font-size="26.90" fill="#1b1b1b" textLength="50.93" lengthAdjust="spacingAndGlyphs">WiFi</text>
<text x="2071.78" y="1332.00" font-size="26.90" fill="#1b1b1b" textLength="90.09" lengthAdjust="spacingAndGlyphs">Linksys</text>
<text x="2175.41" y="1332.00" font-size="26.90" fill="#1b1b1b" textLength="65.60" lengthAdjust="spacingAndGlyphs">C0:...</text>
<circle cx="2265.8" cy="1330.0" r="2.1" fill="#1b1b1b"/>
<circle cx="2272.4" cy="1330.0" r="2.1" fill="#1b1b1b"/>
<circle cx="2279.0" cy="1330.0" r="2.1" fill="#1b1b1b"/>
<circle cx="2311.8" cy="1330.0" r="2.1" fill="#1b1b1b"/>
<circle cx="2318.4" cy="1330.0" r="2.1" fill="#1b1b1b"/>
<circle cx="2325.0" cy="1330.0" r="2.1" fill="#1b1b1b"/>
<circle cx="2358.3" cy="1330.0" r="2.1" fill="#1b1b1b"/>
<circle cx="2364.9" cy="1330.0" r="2.1" fill="#1b1b1b"/>
<circle cx="2371.5" cy="1330.0" r="2.1" fill="#1b1b1b"/>
<circle cx="2450.3" cy="1330.0" r="2.1" fill="#1b1b1b"/>
<circle cx="2456.9" cy="1330.0" r="2.1" fill="#1b1b1b"/>
<circle cx="2463.5" cy="1330.0" r="2.1" fill="#1b1b1b"/>
<circle cx="2496.3" cy="1330.0" r="2.1" fill="#1b1b1b"/>
<circle cx="2502.9" cy="1330.0" r="2.1" fill="#1b1b1b"/>
<circle cx="2509.5" cy="1330.0" r="2.1" fill="#1b1b1b"/>
<text x="2400.72" y="1332.00" font-size="26.90" fill="#1b1b1b" textLength="29.92" lengthAdjust="spacingAndGlyphs">59</text>
<text x="1431.79" y="1370.00" font-size="26.90" fill="#1b1b1b" textLength="179.01" lengthAdjust="spacingAndGlyphs">12.03-14.04...</text>
<text x="1639.66" y="1370.00" font-size="26.90" fill="#1b1b1b" textLength="116.84" lengthAdjust="spacingAndGlyphs">31.88 MB</text>
<text x="1786.05" y="1370.00" font-size="26.90" fill="#1b1b1b" textLength="141.02" lengthAdjust="spacingAndGlyphs">133.33 M...</text>
<text x="1954.69" y="1370.00" font-size="26.90" fill="#1b1b1b" textLength="50.93" lengthAdjust="spacingAndGlyphs">WiFi</text>
<text x="2071.78" y="1370.00" font-size="26.90" fill="#1b1b1b" textLength="90.09" lengthAdjust="spacingAndGlyphs">Linksys</text>
<text x="2175.41" y="1370.00" font-size="26.90" fill="#1b1b1b" textLength="65.60" lengthAdjust="spacingAndGlyphs">C0:...</text>
<circle cx="2265.8" cy="1368.0" r="2.1" fill="#1b1b1b"/>
<circle cx="2272.4" cy="1368.0" r="2.1" fill="#1b1b1b"/>
<circle cx="2279.0" cy="1368.0" r="2.1" fill="#1b1b1b"/>
<circle cx="2311.8" cy="1368.0" r="2.1" fill="#1b1b1b"/>
<circle cx="2318.4" cy="1368.0" r="2.1" fill="#1b1b1b"/>
<circle cx="2325.0" cy="1368.0" r="2.1" fill="#1b1b1b"/>
<circle cx="2358.3" cy="1368.0" r="2.1" fill="#1b1b1b"/>
<circle cx="2364.9" cy="1368.0" r="2.1" fill="#1b1b1b"/>
<circle cx="2371.5" cy="1368.0" r="2.1" fill="#1b1b1b"/>
<circle cx="2450.3" cy="1368.0" r="2.1" fill="#1b1b1b"/>
<circle cx="2456.9" cy="1368.0" r="2.1" fill="#1b1b1b"/>
<circle cx="2463.5" cy="1368.0" r="2.1" fill="#1b1b1b"/>
<circle cx="2496.3" cy="1368.0" r="2.1" fill="#1b1b1b"/>
<circle cx="2502.9" cy="1368.0" r="2.1" fill="#1b1b1b"/>
<circle cx="2509.5" cy="1368.0" r="2.1" fill="#1b1b1b"/>
<text x="2400.72" y="1370.00" font-size="26.90" fill="#1b1b1b" textLength="29.92" lengthAdjust="spacingAndGlyphs">59</text>
<text x="1431.79" y="1408.00" font-size="26.90" fill="#1b1b1b" textLength="179.01" lengthAdjust="spacingAndGlyphs">10.02-12.03...</text>
<text x="1639.66" y="1408.00" font-size="26.90" fill="#1b1b1b" textLength="116.84" lengthAdjust="spacingAndGlyphs">32.00 MB</text>
<text x="1786.05" y="1408.00" font-size="26.90" fill="#1b1b1b" textLength="141.02" lengthAdjust="spacingAndGlyphs">133.86 M...</text>
<text x="1954.69" y="1408.00" font-size="26.90" fill="#1b1b1b" textLength="50.93" lengthAdjust="spacingAndGlyphs">WiFi</text>
<text x="2071.78" y="1408.00" font-size="26.90" fill="#1b1b1b" textLength="90.09" lengthAdjust="spacingAndGlyphs">Linksys</text>
<text x="2175.41" y="1408.00" font-size="26.90" fill="#1b1b1b" textLength="65.60" lengthAdjust="spacingAndGlyphs">C0:...</text>
<circle cx="2265.8" cy="1406.0" r="2.1" fill="#1b1b1b"/>
<circle cx="2272.4" cy="1406.0" r="2.1" fill="#1b1b1b"/>
<circle cx="2279.0" cy="1406.0" r="2.1" fill="#1b1b1b"/>
<circle cx="2311.8" cy="1406.0" r="2.1" fill="#1b1b1b"/>
<circle cx="2318.4" cy="1406.0" r="2.1" fill="#1b1b1b"/>
<circle cx="2325.0" cy="1406.0" r="2.1" fill="#1b1b1b"/>
<circle cx="2358.3" cy="1406.0" r="2.1" fill="#1b1b1b"/>
<circle cx="2364.9" cy="1406.0" r="2.1" fill="#1b1b1b"/>
<circle cx="2371.5" cy="1406.0" r="2.1" fill="#1b1b1b"/>
<circle cx="2450.3" cy="1406.0" r="2.1" fill="#1b1b1b"/>
<circle cx="2456.9" cy="1406.0" r="2.1" fill="#1b1b1b"/>
<circle cx="2463.5" cy="1406.0" r="2.1" fill="#1b1b1b"/>
<circle cx="2496.3" cy="1406.0" r="2.1" fill="#1b1b1b"/>
<circle cx="2502.9" cy="1406.0" r="2.1" fill="#1b1b1b"/>
<circle cx="2509.5" cy="1406.0" r="2.1" fill="#1b1b1b"/>
<text x="2400.72" y="1408.00" font-size="26.90" fill="#1b1b1b" textLength="29.92" lengthAdjust="spacingAndGlyphs">59</text>
<text x="1432.74" y="1446.00" font-size="26.90" fill="#1b1b1b" textLength="191.90" lengthAdjust="spacingAndGlyphs">8.02-10.02 sec</text>
<text x="1639.66" y="1446.00" font-size="26.90" fill="#1b1b1b" textLength="116.84" lengthAdjust="spacingAndGlyphs">34.50 MB</text>
<text x="1786.05" y="1446.00" font-size="26.90" fill="#1b1b1b" textLength="141.02" lengthAdjust="spacingAndGlyphs">144.48 M...</text>
<text x="1954.69" y="1446.00" font-size="26.90" fill="#1b1b1b" textLength="50.93" lengthAdjust="spacingAndGlyphs">WiFi</text>
<text x="2071.78" y="1446.00" font-size="26.90" fill="#1b1b1b" textLength="90.09" lengthAdjust="spacingAndGlyphs">Linksys</text>
<text x="2175.41" y="1446.00" font-size="26.90" fill="#1b1b1b" textLength="65.60" lengthAdjust="spacingAndGlyphs">C0:...</text>
<circle cx="2265.8" cy="1444.0" r="2.1" fill="#1b1b1b"/>
<circle cx="2272.4" cy="1444.0" r="2.1" fill="#1b1b1b"/>
<circle cx="2279.0" cy="1444.0" r="2.1" fill="#1b1b1b"/>
<circle cx="2311.8" cy="1444.0" r="2.1" fill="#1b1b1b"/>
<circle cx="2318.4" cy="1444.0" r="2.1" fill="#1b1b1b"/>
<circle cx="2325.0" cy="1444.0" r="2.1" fill="#1b1b1b"/>
<circle cx="2358.3" cy="1444.0" r="2.1" fill="#1b1b1b"/>
<circle cx="2364.9" cy="1444.0" r="2.1" fill="#1b1b1b"/>
<circle cx="2371.5" cy="1444.0" r="2.1" fill="#1b1b1b"/>
<circle cx="2450.3" cy="1444.0" r="2.1" fill="#1b1b1b"/>
<circle cx="2456.9" cy="1444.0" r="2.1" fill="#1b1b1b"/>
<circle cx="2463.5" cy="1444.0" r="2.1" fill="#1b1b1b"/>
<circle cx="2496.3" cy="1444.0" r="2.1" fill="#1b1b1b"/>
<circle cx="2502.9" cy="1444.0" r="2.1" fill="#1b1b1b"/>
<circle cx="2509.5" cy="1444.0" r="2.1" fill="#1b1b1b"/>
<text x="2400.72" y="1446.00" font-size="26.90" fill="#1b1b1b" textLength="29.92" lengthAdjust="spacingAndGlyphs">59</text>
</svg>
<path d="M437,1491 L2123,1491 Q2133,1491 2133,1501 L2133,1600 L427,1600 L427,1501 Q427,1491 437,1491 Z" fill="url(#dockg)" stroke="#24183f" stroke-width="1.5" opacity="0.96"/>
<rect x="1924" y="1504" width="2" height="81" fill="#7c8190"/>
<defs>
<linearGradient id="fdL" x1="0" y1="0" x2="0" y2="1"><stop offset="0" stop-color="#22cdfb"/><stop offset="1" stop-color="#1f6fe6"/></linearGradient>
<linearGradient id="fdR" x1="0" y1="0" x2="0" y2="1"><stop offset="0" stop-color="#f7f8fa"/><stop offset="1" stop-color="#dae6f1"/></linearGradient>
<linearGradient id="lpG" x1="0" y1="0" x2="0" y2="1"><stop offset="0" stop-color="#d2e0e6"/><stop offset="0.5" stop-color="#a8b2b6"/><stop offset="1" stop-color="#7c7e80"/></linearGradient>
<linearGradient id="scrG" x1="0" y1="0" x2="1" y2="0"><stop offset="0" stop-color="#1a1a1a"/><stop offset="0.45" stop-color="#3a3a3a"/><stop offset="0.55" stop-color="#e8e8e8"/><stop offset="1" stop-color="#f4f4f4"/></linearGradient>
<linearGradient id="msgG" x1="0" y1="0" x2="0" y2="1"><stop offset="0" stop-color="#66d0fb"/><stop offset="1" stop-color="#1b8cf2"/></linearGradient>
<linearGradient id="sfG" x1="0" y1="0" x2="0" y2="1"><stop offset="0" stop-color="#20c4f4"/><stop offset="1" stop-color="#1a5fe4"/></linearGradient>
<linearGradient id="mlG" x1="0" y1="0" x2="0" y2="1"><stop offset="0" stop-color="#5aa4e8"/><stop offset="1" stop-color="#c8e0f4"/></linearGradient>
<linearGradient id="wfG" x1="0" y1="0" x2="0" y2="1"><stop offset="0" stop-color="#3cc4fa"/><stop offset="1" stop-color="#1aa4f0"/></linearGradient>
<linearGradient id="trG" x1="0" y1="0" x2="1" y2="0"><stop offset="0" stop-color="#c8c8cc"/><stop offset="0.5" stop-color="#f2f2f4"/><stop offset="1" stop-color="#c4c4c8"/></linearGradient>
<radialGradient id="kgB" cx="0.45" cy="0.6" r="0.6"><stop offset="0" stop-color="#4aa0f0"/><stop offset="1" stop-color="#1c2c90"/></radialGradient>
<radialGradient id="kgG" cx="0.5" cy="0.4" r="0.7"><stop offset="0" stop-color="#40a090"/><stop offset="1" stop-color="#24507a"/></radialGradient>
<radialGradient id="kgR" cx="0.3" cy="0.4" r="0.8"><stop offset="0" stop-color="#e88a7a"/><stop offset="1" stop-color="#a02a90"/></radialGradient>
</defs>
<rect x="442" y="1508" width="72" height="67.5" rx="3.5" fill="url(#fdR)"/>
<path d="M445.5,1508 L479,1508 Q473,1525 472,1543.5 L482.6,1548 Q482.5,1562 484.5,1575.5 L445.5,1575.5 Q442,1575.5 442,1572 L442,1511.5 Q442,1508 445.5,1508 Z" fill="url(#fdL)"/>
<path d="M479,1508 Q473,1525 472,1543.5 L482.6,1548 Q482.5,1562 484.5,1575.5" fill="none" stroke="#1a5ac8" stroke-width="0.8"/>
<rect x="461" y="1525.5" width="2.6" height="7" rx="1.2" fill="#111"/><rect x="493" y="1525.5" width="2.6" height="7" rx="1.2" fill="#111"/>
<path d="M456,1550.5 Q478,1569 500,1550.5" fill="none" stroke="#111" stroke-width="3" stroke-linecap="round"/>
<circle cx="478" cy="1592" r="4" fill="#c4aaf2"/>
<circle cx="570" cy="1541.1" r="38" fill="#e6ecee"/>
<circle cx="570" cy="1541.1" r="35" fill="url(#lpG)"/>
<path d="M592.7,1519.2 Q591,1526 589.1,1532.2 Q584,1541 578,1548.9 L575.2,1551.7 Q571,1555 570.2,1558.3 Q567,1563 566.3,1569.2 Q565,1562 566.9,1558.9 Q565,1557 562.4,1556.1 L555.8,1550.6 Q556,1547 556.9,1544.4 Q550,1544 543,1545.6 Q548,1540 553,1537.8 Q558,1536 562.4,1535.6 Q567,1530 572.4,1526.1 Q578,1522 583.6,1520.6 Q588,1519.5 592.7,1519.2 Z" fill="#4a4d50"/>
<path d="M554.1,1554.2 Q549,1559 547.4,1564.7 Q553,1563 558,1558.3 L553.6,1558.3 Z" fill="#4a4d50"/>
<circle cx="578" cy="1533.9" r="4.8" fill="#aab0b4"/>
<g transform="rotate(-9 661.6 1541.8)"><rect x="628" y="1508" width="67" height="67.5" rx="10" fill="#b26ef4"/><rect x="628" y="1508" width="67" height="67.5" rx="10" fill="none" stroke="#9a58e0" stroke-width="1"/></g>
<polyline points="636.5,1548.5 656,1562.5 685.5,1522" fill="none" stroke="#4b4b4d" stroke-width="11" stroke-linejoin="round" stroke-linecap="round"/>
<clipPath id="scrClip"><rect x="716.4" y="1503.8" width="75.4" height="75.7" rx="6"/></clipPath>
<g clip-path="url(#scrClip)"><rect x="716" y="1503" width="77" height="77" fill="#f2f2f2"/>
<path d="M716,1503 L748,1503 Q733,1508 731,1520 Q731,1530 745,1538 L764,1550 Q772,1558 768,1566 Q762,1574 748,1573 Q738,1572 734,1566 L733,1580 L716,1580 Z" fill="#2a2a2a"/>
<path d="M772.5,1505 L772.5,1520 Q765,1508 752,1508.5 Q738,1510 738.5,1521 Q740,1530 752,1537 L768,1547 Q779,1556 776,1567 Q771,1579 750,1579 L731.5,1579 L731.5,1565 Q738,1574 750,1573.5 Q766,1572 766,1563 Q765,1556 756,1550 L742,1541 Q730,1532 730.5,1521 Q732,1506 752,1504 Z" fill="#d8dadc" stroke="#6a6a6a" stroke-width="0.8"/>
<path d="M752,1516 Q759,1516 758,1523 Q757,1528 753,1530 Q755,1525 752,1524 Q748,1522 752,1516 Z" fill="#2e2e2e"/>
<path d="M754,1555 Q748,1558 748,1566 Q750,1571 754,1569 Q758,1566 756,1561 Q753,1559 754,1555 Z" fill="#eeeeee"/></g>
<g transform="rotate(-5 846 1541)"><rect x="815" y="1503" width="63" height="77" fill="#fbfbf4" stroke="#c8b888" stroke-width="1"/><rect x="815" y="1503" width="63" height="17" fill="#f6cc3a"/>
<rect x="817" y="1525.0" width="59" height="0.9" fill="#b4b4bc"/>
<rect x="817" y="1529.3" width="59" height="0.9" fill="#b4b4bc"/>
<rect x="817" y="1533.6" width="59" height="0.9" fill="#b4b4bc"/>
<rect x="817" y="1537.9" width="59" height="0.9" fill="#b4b4bc"/>
<rect x="817" y="1542.2" width="59" height="0.9" fill="#b4b4bc"/>
<rect x="817" y="1546.5" width="59" height="0.9" fill="#b4b4bc"/>
<rect x="817" y="1550.8" width="59" height="0.9" fill="#b4b4bc"/>
<rect x="817" y="1555.1" width="59" height="0.9" fill="#b4b4bc"/>
<rect x="817" y="1559.4" width="59" height="0.9" fill="#b4b4bc"/>
<rect x="817" y="1563.7" width="59" height="0.9" fill="#b4b4bc"/>
<rect x="817" y="1568.0" width="59" height="0.9" fill="#b4b4bc"/>
<rect x="817" y="1572.3" width="59" height="0.9" fill="#b4b4bc"/>
<rect x="817" y="1576.6" width="59" height="0.9" fill="#b4b4bc"/>
</g>
<ellipse cx="937" cy="1530.5" rx="38" ry="30" fill="url(#msgG)"/>
<path d="M914,1550 Q912,1566 903,1575 Q920,1572 928,1558 Z" fill="#1b8cf2"/>
<ellipse cx="951" cy="1555" rx="23" ry="18.5" fill="#eef4fb"/>
<path d="M958,1568 L966,1578 L954,1572 Z" fill="#eef4fb"/>
<circle cx="939.5" cy="1557" r="3.3" fill="#1b64c8"/>
<circle cx="951.0" cy="1557" r="3.3" fill="#1b64c8"/>
<circle cx="962.5" cy="1557" r="3.3" fill="#1b64c8"/>
<circle cx="966.9" cy="1514.7" r="17" fill="#e8383a"/>
<text x="966.9" y="1523" font-size="23" fill="#fff" text-anchor="middle">2</text>
<g transform="rotate(-6 1029 1541)"><rect x="994" y="1508" width="72" height="70" fill="#5e6a70"/><rect x="996" y="1504" width="66" height="70" fill="#f6f6f6"/><rect x="996" y="1504" width="66" height="17" fill="#e34c48"/><text x="1029" y="1519" font-size="14.5" fill="#fff" text-anchor="middle">FEB</text><text x="1028" y="1563" font-size="40" fill="#2a2a2a" text-anchor="middle" textLength="44" lengthAdjust="spacingAndGlyphs">15</text></g>
<circle cx="1122.2" cy="1541.3" r="38.5" fill="#f0f2f4" stroke="#c8ccd0" stroke-width="1"/>
<circle cx="1122.2" cy="1541.3" r="34" fill="url(#sfG)"/>
<line x1="1148.2" y1="1541.3" x2="1154.2" y2="1541.3" stroke="#e8f4ff" stroke-width="1"/>
<line x1="1150.5" y1="1545.0" x2="1153.9" y2="1545.5" stroke="#e8f4ff" stroke-width="1"/>
<line x1="1149.7" y1="1548.7" x2="1153.1" y2="1549.6" stroke="#e8f4ff" stroke-width="1"/>
<line x1="1148.5" y1="1552.2" x2="1151.8" y2="1553.5" stroke="#e8f4ff" stroke-width="1"/>
<line x1="1144.7" y1="1554.3" x2="1149.9" y2="1557.3" stroke="#e8f4ff" stroke-width="1"/>
<line x1="1144.8" y1="1558.6" x2="1147.6" y2="1560.8" stroke="#e8f4ff" stroke-width="1"/>
<line x1="1142.4" y1="1561.5" x2="1144.8" y2="1563.9" stroke="#e8f4ff" stroke-width="1"/>
<line x1="1139.5" y1="1563.9" x2="1141.7" y2="1566.7" stroke="#e8f4ff" stroke-width="1"/>
<line x1="1135.2" y1="1563.8" x2="1138.2" y2="1569.0" stroke="#e8f4ff" stroke-width="1"/>
<line x1="1133.1" y1="1567.6" x2="1134.4" y2="1570.9" stroke="#e8f4ff" stroke-width="1"/>
<line x1="1129.6" y1="1568.8" x2="1130.5" y2="1572.2" stroke="#e8f4ff" stroke-width="1"/>
<line x1="1125.9" y1="1569.6" x2="1126.4" y2="1573.0" stroke="#e8f4ff" stroke-width="1"/>
<line x1="1122.2" y1="1567.3" x2="1122.2" y2="1573.3" stroke="#e8f4ff" stroke-width="1"/>
<line x1="1118.5" y1="1569.6" x2="1118.0" y2="1573.0" stroke="#e8f4ff" stroke-width="1"/>
<line x1="1114.8" y1="1568.8" x2="1113.9" y2="1572.2" stroke="#e8f4ff" stroke-width="1"/>
<line x1="1111.3" y1="1567.6" x2="1110.0" y2="1570.9" stroke="#e8f4ff" stroke-width="1"/>
<line x1="1109.2" y1="1563.8" x2="1106.2" y2="1569.0" stroke="#e8f4ff" stroke-width="1"/>
<line x1="1104.9" y1="1563.9" x2="1102.7" y2="1566.7" stroke="#e8f4ff" stroke-width="1"/>
<line x1="1102.0" y1="1561.5" x2="1099.6" y2="1563.9" stroke="#e8f4ff" stroke-width="1"/>
<line x1="1099.6" y1="1558.6" x2="1096.8" y2="1560.8" stroke="#e8f4ff" stroke-width="1"/>
<line x1="1099.7" y1="1554.3" x2="1094.5" y2="1557.3" stroke="#e8f4ff" stroke-width="1"/>
<line x1="1095.9" y1="1552.2" x2="1092.6" y2="1553.5" stroke="#e8f4ff" stroke-width="1"/>
<line x1="1094.7" y1="1548.7" x2="1091.3" y2="1549.6" stroke="#e8f4ff" stroke-width="1"/>
<line x1="1093.9" y1="1545.0" x2="1090.5" y2="1545.5" stroke="#e8f4ff" stroke-width="1"/>
<line x1="1096.2" y1="1541.3" x2="1090.2" y2="1541.3" stroke="#e8f4ff" stroke-width="1"/>
<line x1="1093.9" y1="1537.6" x2="1090.5" y2="1537.1" stroke="#e8f4ff" stroke-width="1"/>
<line x1="1094.7" y1="1533.9" x2="1091.3" y2="1533.0" stroke="#e8f4ff" stroke-width="1"/>
<line x1="1095.9" y1="1530.4" x2="1092.6" y2="1529.1" stroke="#e8f4ff" stroke-width="1"/>
<line x1="1099.7" y1="1528.3" x2="1094.5" y2="1525.3" stroke="#e8f4ff" stroke-width="1"/>
<line x1="1099.6" y1="1524.0" x2="1096.8" y2="1521.8" stroke="#e8f4ff" stroke-width="1"/>
<line x1="1102.0" y1="1521.1" x2="1099.6" y2="1518.7" stroke="#e8f4ff" stroke-width="1"/>
<line x1="1104.9" y1="1518.7" x2="1102.7" y2="1515.9" stroke="#e8f4ff" stroke-width="1"/>
<line x1="1109.2" y1="1518.8" x2="1106.2" y2="1513.6" stroke="#e8f4ff" stroke-width="1"/>
<line x1="1111.3" y1="1515.0" x2="1110.0" y2="1511.7" stroke="#e8f4ff" stroke-width="1"/>
<line x1="1114.8" y1="1513.8" x2="1113.9" y2="1510.4" stroke="#e8f4ff" stroke-width="1"/>
<line x1="1118.5" y1="1513.0" x2="1118.0" y2="1509.6" stroke="#e8f4ff" stroke-width="1"/>
<line x1="1122.2" y1="1515.3" x2="1122.2" y2="1509.3" stroke="#e8f4ff" stroke-width="1"/>
<line x1="1125.9" y1="1513.0" x2="1126.4" y2="1509.6" stroke="#e8f4ff" stroke-width="1"/>
<line x1="1129.6" y1="1513.8" x2="1130.5" y2="1510.4" stroke="#e8f4ff" stroke-width="1"/>
<line x1="1133.1" y1="1515.0" x2="1134.4" y2="1511.7" stroke="#e8f4ff" stroke-width="1"/>
<line x1="1135.2" y1="1518.8" x2="1138.2" y2="1513.6" stroke="#e8f4ff" stroke-width="1"/>
<line x1="1139.5" y1="1518.7" x2="1141.7" y2="1515.9" stroke="#e8f4ff" stroke-width="1"/>
<line x1="1142.4" y1="1521.1" x2="1144.8" y2="1518.7" stroke="#e8f4ff" stroke-width="1"/>
<line x1="1144.8" y1="1524.0" x2="1147.6" y2="1521.8" stroke="#e8f4ff" stroke-width="1"/>
<line x1="1144.7" y1="1528.3" x2="1149.9" y2="1525.3" stroke="#e8f4ff" stroke-width="1"/>
<line x1="1148.5" y1="1530.4" x2="1151.8" y2="1529.1" stroke="#e8f4ff" stroke-width="1"/>
<line x1="1149.7" y1="1533.9" x2="1153.1" y2="1533.0" stroke="#e8f4ff" stroke-width="1"/>
<line x1="1150.5" y1="1537.6" x2="1153.9" y2="1537.1" stroke="#e8f4ff" stroke-width="1"/>
<polygon points="1145,1518 1126,1546 1118,1537" fill="#ef3a3a"/>
<polygon points="1099,1565 1126,1546 1118,1537" fill="#f0f0f0"/>
<circle cx="1122.2" cy="1592" r="4" fill="#c4aaf2"/>
<g transform="rotate(-8 1214 1545)"><rect x="1183" y="1509" width="62" height="72" fill="#fff" stroke="#e0e0e0" stroke-width="2" stroke-dasharray="2.5 2"/><rect x="1188" y="1514" width="52" height="62" fill="url(#mlG)"/><path d="M1193,1522 Q1205,1528 1212,1540 Q1220,1536 1228,1548 Q1236,1556 1240,1566 Q1226,1560 1218,1556 Q1214,1566 1206,1572 Q1208,1558 1206,1550 Q1198,1540 1193,1522 Z" fill="#a88860"/><path d="M1200,1528 Q1210,1536 1214,1546" fill="none" stroke="#e8e0d0" stroke-width="2"/></g>
<circle cx="1238.2" cy="1514.7" r="17.5" fill="#e8383a"/>
<text x="1238.2" y="1522.5" font-size="21" fill="#fff" text-anchor="middle" textLength="33" lengthAdjust="spacingAndGlyphs">599</text>
<circle cx="1214" cy="1592" r="4" fill="#c4aaf2"/>
<g transform="rotate(-6 1305 1542)"><rect x="1273" y="1503" width="62" height="78" rx="5" fill="#c29656"/><rect x="1335" y="1512" width="5" height="14" fill="#e8e8e8"/><rect x="1335" y="1527" width="5" height="14" fill="#58c0e8"/><rect x="1335" y="1542" width="5" height="14" fill="#60c060"/><rect x="1335" y="1557" width="5" height="14" fill="#f0c040"/><circle cx="1304" cy="1537" r="18" fill="none" stroke="#a87c40" stroke-width="2"/><circle cx="1304" cy="1532" r="6" fill="#a87c40"/><path d="M1292,1551 Q1304,1538 1316,1551 Z" fill="#a87c40"/></g>
<g transform="rotate(-7 1395 1540)"><rect x="1362" y="1507" width="66" height="68" fill="#f8f6ee"/><rect x="1366" y="1511" width="38" height="6" fill="#78c860"/><path d="M1366,1525 L1406,1525 L1406,1545" fill="none" stroke="#3a8ef0" stroke-width="5"/><path d="M1366,1550 Q1390,1550 1405,1572" fill="none" stroke="#f4d040" stroke-width="6"/><path d="M1378,1534 L1396,1534 L1396,1548 Q1387,1554 1378,1548 Z" fill="#3a78d8"/></g>
<circle cx="1418" cy="1557" r="19.5" fill="#f4f6f8" stroke="#d0d4d8" stroke-width="1"/><circle cx="1418" cy="1557" r="11" fill="none" stroke="#5a7a90" stroke-width="1.2"/>
<text x="1418" y="1562" font-size="12" fill="#333" text-anchor="middle">3D</text><polygon points="1418,1540 1421,1545 1415,1545" fill="#e02020"/>
<circle cx="1489.8" cy="1541.5" r="38.5" fill="#f2f2f2" stroke="#dedede" stroke-width="1"/>
<ellipse cx="1489.8" cy="1522.5" rx="13" ry="9" transform="rotate(-90.0 1489.8 1522.5)" fill="#f4a030" fill-opacity="0.8"/>
<ellipse cx="1501.0" cy="1526.1" rx="13" ry="9" transform="rotate(-54.0 1501.0 1526.1)" fill="#f4d838" fill-opacity="0.8"/>
<ellipse cx="1507.9" cy="1535.6" rx="13" ry="9" transform="rotate(-18.0 1507.9 1535.6)" fill="#a0d048" fill-opacity="0.8"/>
<ellipse cx="1507.9" cy="1547.4" rx="13" ry="9" transform="rotate(18.0 1507.9 1547.4)" fill="#58b868" fill-opacity="0.8"/>
<ellipse cx="1501.0" cy="1556.9" rx="13" ry="9" transform="rotate(54.0 1501.0 1556.9)" fill="#5aa8d8" fill-opacity="0.8"/>
<ellipse cx="1489.8" cy="1560.5" rx="13" ry="9" transform="rotate(90.0 1489.8 1560.5)" fill="#6888d0" fill-opacity="0.8"/>
<ellipse cx="1478.6" cy="1556.9" rx="13" ry="9" transform="rotate(126.0 1478.6 1556.9)" fill="#a878c8" fill-opacity="0.8"/>
<ellipse cx="1471.7" cy="1547.4" rx="13" ry="9" transform="rotate(162.0 1471.7 1547.4)" fill="#e06888" fill-opacity="0.8"/>
<ellipse cx="1471.7" cy="1535.6" rx="13" ry="9" transform="rotate(198.0 1471.7 1535.6)" fill="#e84a48" fill-opacity="0.8"/>
<ellipse cx="1478.6" cy="1526.1" rx="13" ry="9" transform="rotate(234.0 1478.6 1526.1)" fill="#f06a30" fill-opacity="0.8"/>
<circle cx="1489.8" cy="1541.5" r="2" fill="#fff"/>
<g transform="rotate(-8 1578 1541)"><rect x="1549" y="1505" width="62" height="74" fill="#fbfbfb" stroke="#d8d8d8" stroke-width="1"/><rect x="1549" y="1505" width="62" height="15" fill="#f29a30"/><text x="1553" y="1517.5" font-size="11" fill="#fff">PAGES</text><rect x="1556" y="1525" width="26" height="20" fill="#3aa0e8"/><circle cx="1569" cy="1535" r="6" fill="#f4a020"/>
<rect x="1556" y="1550" width="48" height="1.2" fill="#9a9a9a"/>
<rect x="1556" y="1553" width="48" height="1.2" fill="#9a9a9a"/>
<rect x="1556" y="1557" width="48" height="1.2" fill="#9a9a9a"/>
<rect x="1556" y="1560" width="48" height="1.2" fill="#9a9a9a"/>
<rect x="1556" y="1564" width="48" height="1.2" fill="#9a9a9a"/>
<rect x="1556" y="1567" width="48" height="1.2" fill="#9a9a9a"/>
<rect x="1556" y="1571" width="48" height="1.2" fill="#9a9a9a"/>
<rect x="1556" y="1574" width="48" height="1.2" fill="#9a9a9a"/>
</g><path d="M1619,1503 L1626,1506 L1600,1578 L1596,1582 L1594,1576 Z" fill="#f2a020" stroke="#b87010" stroke-width="1"/>
<path d="M1640,1546 L1708,1546 L1712,1578 L1636,1578 Z" fill="#f0f0f0"/>
<rect x="1647.0" y="1541.5" width="13.7" height="28.1" fill="#e8455a"/>
<rect x="1662.0" y="1527.0" width="13.6" height="42.6" fill="#f29530"/>
<rect x="1677.6" y="1506.5" width="13.2" height="63.1" fill="#34c050"/>
<rect x="1692.7" y="1518.7" width="13.6" height="50.9" fill="#3a9cf0"/>
<linearGradient id="afG" x1="0" y1="0" x2="0" y2="1"><stop offset="0" stop-color="#f4b0f6"/><stop offset="1" stop-color="#c454e6"/></linearGradient>
<polygon points="1766,1502 1810,1565 1802,1578 1734,1578 1722,1563" fill="#6a1ea8"/>
<polygon points="1766,1514 1799,1569 1734,1569" fill="url(#afG)"/>
<path d="M1762,1521 L1742,1565 M1748,1550 L1796,1560 M1790,1550 L1752,1569 M1770,1524 L1788,1556" stroke="#6a1ea8" stroke-width="2.6"/>
<circle cx="1764" cy="1552" r="4" fill="#5a1090"/>
<circle cx="1857.8" cy="1541.8" r="42.7" fill="#8ed8f6"/><circle cx="1857.8" cy="1541.8" r="41.3" fill="#0d2a46"/><circle cx="1857.8" cy="1541.8" r="37" fill="#29b2f4"/>
<rect x="1832.9" y="1537.2" width="14.6" height="27.6" rx="1.5" fill="#0d2a46"/>
<rect x="1834.3" y="1538.6" width="11.8" height="21" fill="#9ad8fa"/>
<circle cx="1840.2" cy="1562.3" r="1.2" fill="#dff2fc"/>
<rect x="1868.3" y="1537.2" width="14.6" height="27.6" rx="1.5" fill="#0d2a46"/>
<rect x="1869.7" y="1538.6" width="11.8" height="21" fill="#9ad8fa"/>
<circle cx="1875.6" cy="1562.3" r="1.2" fill="#dff2fc"/>
<circle cx="1857.9" cy="1526.7" r="10.8" fill="#0d2a46"/>
<path d="M1851.5,1533.5 Q1855,1530 1858,1531.5 Q1861,1530 1864.3,1533.5 Q1858,1538 1851.5,1533.5 Z" fill="#9ad8fa"/>
<line x1="1857.9" y1="1526.7" x2="1864.6" y2="1520" stroke="#dff2fc" stroke-width="1.1"/><circle cx="1857.9" cy="1526.7" r="1.5" fill="#dff2fc"/>
<path d="M1844.6,1526.5 L1839.8,1526.5 L1839.8,1535.3 M1871.3,1526.5 L1876,1526.5 L1876,1535.3" fill="none" stroke="#0d2a46" stroke-width="1.6"/>
<circle cx="1857.8" cy="1592" r="4" fill="#a8c0b0"/>
<rect x="1958" y="1505" width="64" height="22" fill="#f4f4f4"/><text x="1990" y="1516" font-size="10.5" font-weight="bold" fill="#e06878" text-anchor="middle">the edge</text>
<rect x="1960" y="1507" width="7" height="7" fill="#333"/><rect x="2013" y="1507" width="7" height="7" fill="#333"/><rect x="1960" y="1519" width="58" height="4" fill="#7ab0e0"/>
<path d="M1953,1518 L2012,1518 L2027,1534 L2027,1572.5 L1953,1572.5 Z" fill="#fafafa" stroke="#d8d8d8" stroke-width="1"/>
<rect x="1968" y="1524" width="40" height="22" fill="none" stroke="#666" stroke-width="1"/><rect x="1968" y="1547" width="40" height="20" fill="none" stroke="#666" stroke-width="1"/>
<rect x="1968" y="1528.0" width="40" height="0.8" fill="#777"/>
<rect x="1968" y="1531.5" width="40" height="0.8" fill="#777"/>
<rect x="1968" y="1535.0" width="40" height="0.8" fill="#777"/>
<rect x="1968" y="1538.5" width="40" height="0.8" fill="#777"/>
<rect x="1968" y="1542.0" width="40" height="0.8" fill="#777"/>
<rect x="1968" y="1551.0" width="40" height="0.8" fill="#777"/>
<rect x="1968" y="1554.5" width="40" height="0.8" fill="#777"/>
<rect x="1968" y="1558.0" width="40" height="0.8" fill="#777"/>
<rect x="1968" y="1561.5" width="40" height="0.8" fill="#777"/>
<text x="1990" y="1568" font-size="10" fill="#999" text-anchor="middle">XLS</text>
<linearGradient id="trG2" x1="0" y1="0" x2="1" y2="0"><stop offset="0" stop-color="#d4d4d8"/><stop offset="0.45" stop-color="#f6f6f8"/><stop offset="1" stop-color="#cfd0d4"/></linearGradient>
<path d="M2051,1510 L2113,1510 L2104,1577 Q2082,1584 2060,1577 Z" fill="url(#trG2)"/>
<ellipse cx="2082" cy="1510" rx="31" ry="6" fill="#e4e4e8" stroke="#c0c0c4" stroke-width="1"/>
<path d="M2058,1510 L2064,1502 L2072,1506 L2080,1499 L2090,1505 L2098,1500 L2106,1508 L2102,1513 L2062,1513 Z" fill="#d8d8dc" stroke="#9a9aa0" stroke-width="0.8"/>
<polygon points="2070,1505 2078,1503 2080,1510 2072,1511" fill="#4a8ad0"/><polygon points="2090,1504 2097,1506 2095,1512 2088,1510" fill="#e07040"/><polygon points="2080,1506 2086,1505 2087,1511 2081,1511" fill="#60b060"/>
<circle cx="2497" cy="1541" r="58" fill="#9c8ae0"/>
<path d="M2452,1530 Q2448,1490 2495,1484 Q2535,1482 2545,1522 Q2525,1518 2512,1528 Q2500,1548 2485,1547 Q2466,1546 2452,1530 Z" fill="url(#kgB)"/>
<path d="M2437,1548 Q2436,1530 2446,1515 Q2450,1545 2470,1552 Q2500,1560 2506,1572 Q2510,1592 2498,1598 Q2470,1600 2450,1585 Q2437,1568 2437,1548 Z" fill="url(#kgG)"/>
<path d="M2503,1530 Q2515,1512 2540,1515 Q2560,1530 2558,1560 Q2555,1590 2520,1600 Q2515,1580 2520,1568 Q2512,1550 2503,1530 Z" fill="url(#kgR)"/>
<text x="2528" y="1553" font-size="26" font-weight="bold" fill="#e8b898" stroke="#8a4a60" stroke-width="0.8" text-anchor="middle" textLength="25" lengthAdjust="spacingAndGlyphs">KG</text>
<circle cx="2497" cy="1541" r="58" fill="none" stroke="#8aa0f0" stroke-width="1.5" opacity="0.6"/>
</svg></body></html>
